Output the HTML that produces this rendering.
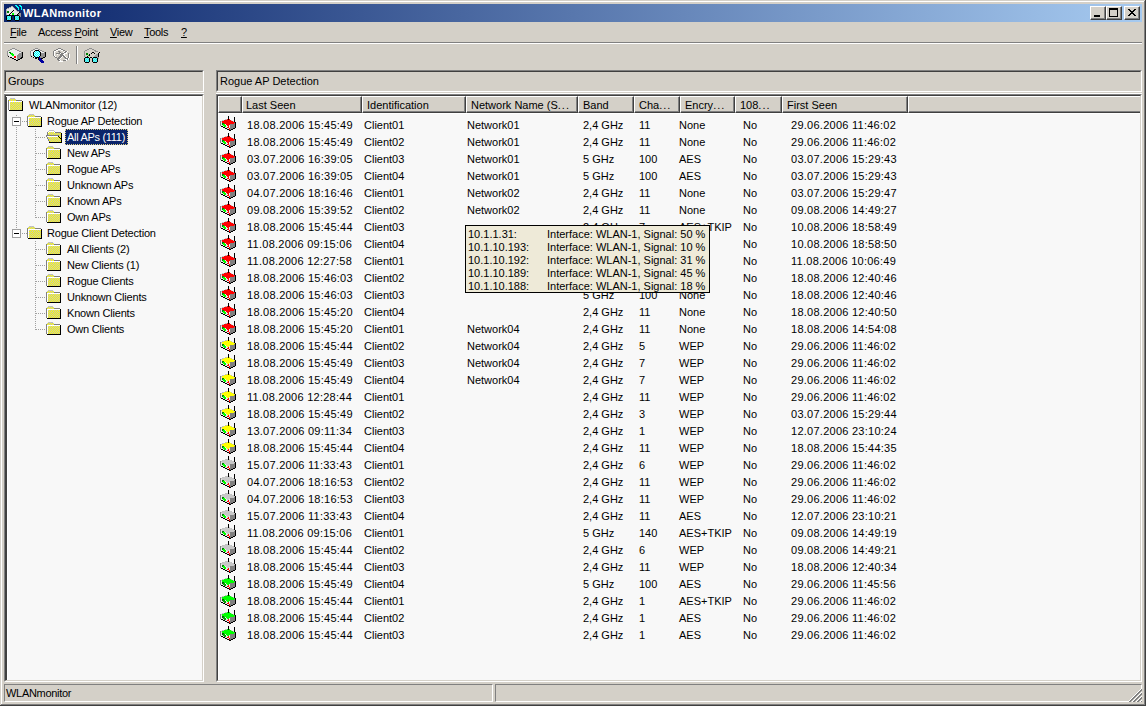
<!DOCTYPE html><html><head><meta charset="utf-8"><style>
*{margin:0;padding:0;box-sizing:border-box}
html,body{width:1146px;height:706px;overflow:hidden;background:#d4d0c8;font-family:"Liberation Sans",sans-serif;font-size:11px;color:#000}
.a{position:absolute}
.t{position:absolute;white-space:pre;line-height:13px;height:13px}
.ic{position:absolute;overflow:visible}
.hl{position:absolute;height:1px}
.vl{position:absolute;width:1px}
u{text-decoration:underline;text-underline-offset:1px;text-decoration-thickness:1px}
</style></head><body>

<div class="a" style="left:1px;top:1px;width:1144px;height:1px;background:#fff;"></div>
<div class="a" style="left:1px;top:1px;width:1px;height:704px;background:#fff;"></div>
<div class="a" style="left:1144px;top:1px;width:1px;height:704px;background:#808080;"></div>
<div class="a" style="left:1px;top:704px;width:1144px;height:1px;background:#808080;"></div>
<div class="a" style="left:1145px;top:0px;width:1px;height:706px;background:#404040;"></div>
<div class="a" style="left:0px;top:705px;width:1146px;height:1px;background:#404040;"></div>
<div class="a" style="left:4px;top:4px;width:1138px;height:18px;background:linear-gradient(to right,#0a246a,#a6caf0)"></div>
<div class="t" style="left:23px;top:7px;color:#fff;font-weight:bold;letter-spacing:0.4px">WLANmonitor</div>
<div class="a" style="left:1090px;top:6px;width:16px;height:14px;background:#d4d0c8;border-top:1px solid #fff;border-left:1px solid #fff;border-right:1px solid #404040;border-bottom:1px solid #404040;box-shadow:inset -1px -1px 0 #808080"><div class="a" style="left:3px;top:8px;width:6px;height:2px;background:#000"></div></div>
<div class="a" style="left:1106px;top:6px;width:16px;height:14px;background:#d4d0c8;border-top:1px solid #fff;border-left:1px solid #fff;border-right:1px solid #404040;border-bottom:1px solid #404040;box-shadow:inset -1px -1px 0 #808080"><div class="a" style="left:2px;top:1px;width:9px;height:9px;border:1px solid #000;border-top-width:2px"></div></div>
<div class="a" style="left:1124px;top:6px;width:16px;height:14px;background:#d4d0c8;border-top:1px solid #fff;border-left:1px solid #fff;border-right:1px solid #404040;border-bottom:1px solid #404040;box-shadow:inset -1px -1px 0 #808080"><svg class="a" style="left:3px;top:2px" width="8" height="7" shape-rendering="crispEdges"><rect x="0" y="0" width="2" height="1" fill="#000"/><rect x="6" y="0" width="2" height="1" fill="#000"/><rect x="1" y="1" width="2" height="1" fill="#000"/><rect x="5" y="1" width="2" height="1" fill="#000"/><rect x="2" y="2" width="4" height="1" fill="#000"/><rect x="3" y="3" width="2" height="1" fill="#000"/><rect x="2" y="4" width="4" height="1" fill="#000"/><rect x="1" y="5" width="2" height="1" fill="#000"/><rect x="5" y="5" width="2" height="1" fill="#000"/><rect x="0" y="6" width="2" height="1" fill="#000"/><rect x="6" y="6" width="2" height="1" fill="#000"/></svg></div>
<div class="t" style="left:10px;top:26px;letter-spacing:-0.3px"><u>F</u>ile</div>
<div class="t" style="left:38px;top:26px;letter-spacing:-0.3px">Access <u>P</u>oint</div>
<div class="t" style="left:110px;top:26px;letter-spacing:-0.3px"><u>V</u>iew</div>
<div class="t" style="left:144px;top:26px;letter-spacing:-0.3px"><u>T</u>ools</div>
<div class="t" style="left:181px;top:26px;letter-spacing:-0.3px"><u>?</u></div>
<div class="a" style="left:4px;top:42px;width:1138px;height:1px;background:#808080;"></div>
<div class="a" style="left:4px;top:43px;width:1138px;height:1px;background:#fff;"></div>
<div class="a" style="left:76px;top:46px;width:1px;height:18px;background:#808080;"></div>
<div class="a" style="left:77px;top:46px;width:1px;height:18px;background:#fff;"></div>
<svg class="ic" style="left:7px;top:47px" width="16" height="14" shape-rendering="crispEdges"><rect x="5" y="1" width="3" height="1" fill="#909090"/><rect x="3" y="2" width="2" height="1" fill="#909090"/><rect x="5" y="2" width="3" height="1" fill="#ececec"/><rect x="8" y="2" width="2" height="1" fill="#909090"/><rect x="1" y="3" width="2" height="1" fill="#909090"/><rect x="3" y="3" width="7" height="1" fill="#ececec"/><rect x="10" y="3" width="2" height="1" fill="#909090"/><rect x="0" y="4" width="1" height="1" fill="#909090"/><rect x="1" y="4" width="11" height="1" fill="#ececec"/><rect x="12" y="4" width="2" height="1" fill="#909090"/><rect x="0" y="5" width="1" height="1" fill="#909090"/><rect x="1" y="5" width="1" height="1" fill="#ececec"/><rect x="2" y="5" width="2" height="1" fill="#008000"/><rect x="4" y="5" width="10" height="1" fill="#ececec"/><rect x="14" y="5" width="1" height="1" fill="#909090"/><rect x="15" y="5" width="1" height="1" fill="#000000"/><rect x="0" y="6" width="1" height="1" fill="#909090"/><rect x="1" y="6" width="2" height="1" fill="#ececec"/><rect x="3" y="6" width="1" height="1" fill="#008000"/><rect x="4" y="6" width="2" height="1" fill="#00ff00"/><rect x="6" y="6" width="6" height="1" fill="#ececec"/><rect x="12" y="6" width="3" height="1" fill="#909090"/><rect x="15" y="6" width="1" height="1" fill="#000000"/><rect x="0" y="7" width="1" height="1" fill="#909090"/><rect x="1" y="7" width="3" height="1" fill="#ececec"/><rect x="4" y="7" width="3" height="1" fill="#00ff00"/><rect x="7" y="7" width="4" height="1" fill="#ececec"/><rect x="11" y="7" width="4" height="1" fill="#909090"/><rect x="15" y="7" width="1" height="1" fill="#000000"/><rect x="0" y="8" width="1" height="1" fill="#909090"/><rect x="2" y="8" width="3" height="1" fill="#ececec"/><rect x="5" y="8" width="2" height="1" fill="#00ff00"/><rect x="7" y="8" width="3" height="1" fill="#ececec"/><rect x="10" y="8" width="5" height="1" fill="#909090"/><rect x="15" y="8" width="1" height="1" fill="#000000"/><rect x="1" y="9" width="1" height="1" fill="#000000"/><rect x="2" y="9" width="5" height="1" fill="#ececec"/><rect x="7" y="9" width="2" height="1" fill="#ff0000"/><rect x="9" y="9" width="1" height="1" fill="#ececec"/><rect x="10" y="9" width="5" height="1" fill="#909090"/><rect x="15" y="9" width="1" height="1" fill="#000000"/><rect x="3" y="10" width="2" height="1" fill="#000000"/><rect x="5" y="10" width="2" height="1" fill="#ececec"/><rect x="7" y="10" width="2" height="1" fill="#ff0000"/><rect x="9" y="10" width="1" height="1" fill="#ececec"/><rect x="10" y="10" width="4" height="1" fill="#909090"/><rect x="14" y="10" width="2" height="1" fill="#000000"/><rect x="5" y="11" width="2" height="1" fill="#000000"/><rect x="7" y="11" width="3" height="1" fill="#ececec"/><rect x="10" y="11" width="3" height="1" fill="#909090"/><rect x="13" y="11" width="2" height="1" fill="#000000"/><rect x="7" y="12" width="2" height="1" fill="#000000"/><rect x="9" y="12" width="1" height="1" fill="#ececec"/><rect x="10" y="12" width="1" height="1" fill="#909090"/><rect x="11" y="12" width="2" height="1" fill="#000000"/><rect x="9" y="13" width="2" height="1" fill="#000000"/></svg>
<svg class="ic" style="left:30px;top:47px" width="16" height="16" shape-rendering="crispEdges"><rect x="5" y="1" width="3" height="1" fill="#909090"/><rect x="3" y="2" width="2" height="1" fill="#909090"/><rect x="5" y="2" width="3" height="1" fill="#ececec"/><rect x="8" y="2" width="2" height="1" fill="#909090"/><rect x="1" y="3" width="2" height="1" fill="#909090"/><rect x="3" y="3" width="2" height="1" fill="#ececec"/><rect x="5" y="3" width="4" height="1" fill="#000000"/><rect x="9" y="3" width="1" height="1" fill="#ececec"/><rect x="10" y="3" width="2" height="1" fill="#909090"/><rect x="0" y="4" width="1" height="1" fill="#909090"/><rect x="1" y="4" width="3" height="1" fill="#ececec"/><rect x="4" y="4" width="1" height="1" fill="#000000"/><rect x="5" y="4" width="1" height="1" fill="#c0ffff"/><rect x="6" y="4" width="1" height="1" fill="#00ffff"/><rect x="7" y="4" width="1" height="1" fill="#c0ffff"/><rect x="8" y="4" width="1" height="1" fill="#00ffff"/><rect x="9" y="4" width="1" height="1" fill="#000000"/><rect x="10" y="4" width="2" height="1" fill="#ececec"/><rect x="12" y="4" width="2" height="1" fill="#909090"/><rect x="0" y="5" width="1" height="1" fill="#909090"/><rect x="1" y="5" width="2" height="1" fill="#ececec"/><rect x="3" y="5" width="1" height="1" fill="#000000"/><rect x="4" y="5" width="1" height="1" fill="#c0ffff"/><rect x="5" y="5" width="1" height="1" fill="#00ffff"/><rect x="6" y="5" width="1" height="1" fill="#c0ffff"/><rect x="7" y="5" width="1" height="1" fill="#00ffff"/><rect x="8" y="5" width="1" height="1" fill="#c0ffff"/><rect x="9" y="5" width="1" height="1" fill="#00ffff"/><rect x="10" y="5" width="1" height="1" fill="#000000"/><rect x="11" y="5" width="3" height="1" fill="#ececec"/><rect x="14" y="5" width="1" height="1" fill="#909090"/><rect x="15" y="5" width="1" height="1" fill="#000000"/><rect x="0" y="6" width="1" height="1" fill="#909090"/><rect x="1" y="6" width="2" height="1" fill="#ececec"/><rect x="3" y="6" width="1" height="1" fill="#000000"/><rect x="4" y="6" width="1" height="1" fill="#00ffff"/><rect x="5" y="6" width="1" height="1" fill="#c0ffff"/><rect x="6" y="6" width="1" height="1" fill="#00ffff"/><rect x="7" y="6" width="1" height="1" fill="#c0ffff"/><rect x="8" y="6" width="1" height="1" fill="#00ffff"/><rect x="9" y="6" width="1" height="1" fill="#c0ffff"/><rect x="10" y="6" width="1" height="1" fill="#000000"/><rect x="11" y="6" width="4" height="1" fill="#909090"/><rect x="15" y="6" width="1" height="1" fill="#000000"/><rect x="0" y="7" width="1" height="1" fill="#909090"/><rect x="1" y="7" width="2" height="1" fill="#ececec"/><rect x="3" y="7" width="1" height="1" fill="#000000"/><rect x="4" y="7" width="1" height="1" fill="#c0ffff"/><rect x="5" y="7" width="1" height="1" fill="#00ffff"/><rect x="6" y="7" width="1" height="1" fill="#c0ffff"/><rect x="7" y="7" width="1" height="1" fill="#00ffff"/><rect x="8" y="7" width="1" height="1" fill="#c0ffff"/><rect x="9" y="7" width="1" height="1" fill="#00ffff"/><rect x="10" y="7" width="1" height="1" fill="#000000"/><rect x="11" y="7" width="4" height="1" fill="#909090"/><rect x="15" y="7" width="1" height="1" fill="#000000"/><rect x="0" y="8" width="1" height="1" fill="#909090"/><rect x="2" y="8" width="1" height="1" fill="#ececec"/><rect x="3" y="8" width="1" height="1" fill="#000000"/><rect x="4" y="8" width="1" height="1" fill="#00ffff"/><rect x="5" y="8" width="1" height="1" fill="#c0ffff"/><rect x="6" y="8" width="1" height="1" fill="#00ffff"/><rect x="7" y="8" width="1" height="1" fill="#c0ffff"/><rect x="8" y="8" width="1" height="1" fill="#00ffff"/><rect x="9" y="8" width="1" height="1" fill="#c0ffff"/><rect x="10" y="8" width="1" height="1" fill="#000000"/><rect x="11" y="8" width="4" height="1" fill="#909090"/><rect x="15" y="8" width="1" height="1" fill="#000000"/><rect x="1" y="9" width="1" height="1" fill="#000000"/><rect x="3" y="9" width="1" height="1" fill="#ececec"/><rect x="4" y="9" width="1" height="1" fill="#000000"/><rect x="5" y="9" width="1" height="1" fill="#00ffff"/><rect x="6" y="9" width="1" height="1" fill="#c0ffff"/><rect x="7" y="9" width="1" height="1" fill="#00ffff"/><rect x="8" y="9" width="1" height="1" fill="#c0ffff"/><rect x="9" y="9" width="1" height="1" fill="#000000"/><rect x="10" y="9" width="5" height="1" fill="#909090"/><rect x="15" y="9" width="1" height="1" fill="#000000"/><rect x="3" y="10" width="1" height="1" fill="#000000"/><rect x="4" y="10" width="1" height="1" fill="#ececec"/><rect x="5" y="10" width="4" height="1" fill="#000000"/><rect x="9" y="10" width="1" height="1" fill="#0000a0"/><rect x="10" y="10" width="3" height="1" fill="#909090"/><rect x="13" y="10" width="2" height="1" fill="#000000"/><rect x="5" y="11" width="2" height="1" fill="#000000"/><rect x="8" y="11" width="1" height="1" fill="#000000"/><rect x="9" y="11" width="2" height="1" fill="#0000a0"/><rect x="11" y="11" width="2" height="1" fill="#000000"/><rect x="8" y="12" width="1" height="1" fill="#000000"/><rect x="9" y="12" width="3" height="1" fill="#0000a0"/><rect x="9" y="13" width="4" height="1" fill="#0000a0"/><rect x="10" y="14" width="4" height="1" fill="#0000a0"/><rect x="11" y="15" width="3" height="1" fill="#0000a0"/></svg>
<svg class="ic" style="left:53px;top:47px" width="17" height="15" shape-rendering="crispEdges"><rect x="5" y="1" width="3" height="1" fill="#808080"/><rect x="3" y="2" width="2" height="1" fill="#808080"/><rect x="5" y="2" width="3" height="1" fill="#ffffff"/><rect x="8" y="2" width="2" height="1" fill="#808080"/><rect x="1" y="3" width="2" height="1" fill="#808080"/><rect x="3" y="3" width="2" height="1" fill="#ffffff"/><rect x="8" y="3" width="2" height="1" fill="#ffffff"/><rect x="10" y="3" width="2" height="1" fill="#808080"/><rect x="0" y="4" width="1" height="1" fill="#808080"/><rect x="1" y="4" width="2" height="1" fill="#ffffff"/><rect x="5" y="4" width="2" height="1" fill="#808080"/><rect x="11" y="4" width="1" height="1" fill="#ffffff"/><rect x="12" y="4" width="2" height="1" fill="#808080"/><rect x="14" y="4" width="1" height="1" fill="#ffffff"/><rect x="0" y="5" width="1" height="1" fill="#808080"/><rect x="1" y="5" width="1" height="1" fill="#ffffff"/><rect x="6" y="5" width="2" height="1" fill="#808080"/><rect x="10" y="5" width="1" height="1" fill="#ffffff"/><rect x="11" y="5" width="2" height="1" fill="#808080"/><rect x="13" y="5" width="1" height="1" fill="#ffffff"/><rect x="0" y="6" width="1" height="1" fill="#808080"/><rect x="1" y="6" width="1" height="1" fill="#ffffff"/><rect x="3" y="6" width="4" height="1" fill="#808080"/><rect x="7" y="6" width="1" height="1" fill="#ffffff"/><rect x="8" y="6" width="3" height="1" fill="#808080"/><rect x="11" y="6" width="3" height="1" fill="#ffffff"/><rect x="15" y="6" width="1" height="1" fill="#808080"/><rect x="0" y="7" width="1" height="1" fill="#808080"/><rect x="1" y="7" width="1" height="1" fill="#ffffff"/><rect x="4" y="7" width="1" height="1" fill="#ffffff"/><rect x="7" y="7" width="3" height="1" fill="#808080"/><rect x="10" y="7" width="2" height="1" fill="#ffffff"/><rect x="15" y="7" width="1" height="1" fill="#808080"/><rect x="16" y="7" width="1" height="1" fill="#ffffff"/><rect x="0" y="8" width="1" height="1" fill="#808080"/><rect x="1" y="8" width="1" height="1" fill="#ffffff"/><rect x="7" y="8" width="4" height="1" fill="#808080"/><rect x="11" y="8" width="1" height="1" fill="#ffffff"/><rect x="15" y="8" width="1" height="1" fill="#808080"/><rect x="16" y="8" width="1" height="1" fill="#ffffff"/><rect x="1" y="9" width="1" height="1" fill="#808080"/><rect x="2" y="9" width="1" height="1" fill="#ffffff"/><rect x="6" y="9" width="3" height="1" fill="#808080"/><rect x="9" y="9" width="1" height="1" fill="#ffffff"/><rect x="10" y="9" width="2" height="1" fill="#808080"/><rect x="12" y="9" width="1" height="1" fill="#ffffff"/><rect x="15" y="9" width="1" height="1" fill="#808080"/><rect x="16" y="9" width="1" height="1" fill="#ffffff"/><rect x="2" y="10" width="2" height="1" fill="#808080"/><rect x="5" y="10" width="3" height="1" fill="#808080"/><rect x="8" y="10" width="1" height="1" fill="#ffffff"/><rect x="11" y="10" width="2" height="1" fill="#808080"/><rect x="13" y="10" width="1" height="1" fill="#ffffff"/><rect x="15" y="10" width="1" height="1" fill="#808080"/><rect x="16" y="10" width="1" height="1" fill="#ffffff"/><rect x="4" y="11" width="3" height="1" fill="#808080"/><rect x="7" y="11" width="1" height="1" fill="#ffffff"/><rect x="12" y="11" width="3" height="1" fill="#808080"/><rect x="15" y="11" width="1" height="1" fill="#ffffff"/><rect x="4" y="12" width="2" height="1" fill="#808080"/><rect x="6" y="12" width="1" height="1" fill="#ffffff"/><rect x="12" y="12" width="2" height="1" fill="#ffffff"/><rect x="14" y="12" width="1" height="1" fill="#808080"/><rect x="15" y="12" width="1" height="1" fill="#ffffff"/><rect x="5" y="13" width="2" height="1" fill="#808080"/><rect x="7" y="13" width="1" height="1" fill="#ffffff"/><rect x="10" y="13" width="3" height="1" fill="#808080"/><rect x="13" y="13" width="1" height="1" fill="#ffffff"/><rect x="6" y="14" width="4" height="1" fill="#ffffff"/></svg>
<svg class="ic" style="left:84px;top:47px" width="16" height="16" shape-rendering="crispEdges"><rect x="5" y="1" width="3" height="1" fill="#909090"/><rect x="3" y="2" width="2" height="1" fill="#909090"/><rect x="8" y="2" width="2" height="1" fill="#909090"/><rect x="1" y="3" width="2" height="1" fill="#909090"/><rect x="10" y="3" width="2" height="1" fill="#909090"/><rect x="0" y="4" width="1" height="1" fill="#909090"/><rect x="11" y="4" width="3" height="1" fill="#909090"/><rect x="0" y="5" width="1" height="1" fill="#909090"/><rect x="8" y="5" width="2" height="1" fill="#000000"/><rect x="15" y="5" width="1" height="1" fill="#000000"/><rect x="0" y="6" width="1" height="1" fill="#909090"/><rect x="2" y="6" width="2" height="1" fill="#008000"/><rect x="7" y="6" width="1" height="1" fill="#000000"/><rect x="10" y="6" width="1" height="1" fill="#000000"/><rect x="14" y="6" width="1" height="1" fill="#000000"/><rect x="0" y="7" width="1" height="1" fill="#909090"/><rect x="2" y="7" width="2" height="1" fill="#008000"/><rect x="5" y="7" width="1" height="1" fill="#000000"/><rect x="12" y="7" width="2" height="1" fill="#a0a0a0"/><rect x="14" y="7" width="1" height="1" fill="#000000"/><rect x="0" y="8" width="1" height="1" fill="#909090"/><rect x="4" y="8" width="1" height="1" fill="#00ff00"/><rect x="5" y="8" width="1" height="1" fill="#000000"/><rect x="11" y="8" width="3" height="1" fill="#a0a0a0"/><rect x="14" y="8" width="1" height="1" fill="#000000"/><rect x="0" y="9" width="1" height="1" fill="#909090"/><rect x="3" y="9" width="1" height="1" fill="#000000"/><rect x="10" y="9" width="4" height="1" fill="#a0a0a0"/><rect x="14" y="9" width="1" height="1" fill="#000000"/><rect x="1" y="10" width="4" height="1" fill="#000000"/><rect x="6" y="10" width="2" height="1" fill="#000000"/><rect x="9" y="10" width="4" height="1" fill="#000000"/><rect x="13" y="10" width="2" height="1" fill="#a0a0a0"/><rect x="0" y="11" width="1" height="1" fill="#000000"/><rect x="1" y="11" width="1" height="1" fill="#00ffff"/><rect x="2" y="11" width="1" height="1" fill="#a0e0e0"/><rect x="3" y="11" width="1" height="1" fill="#00ffff"/><rect x="4" y="11" width="1" height="1" fill="#a0e0e0"/><rect x="5" y="11" width="1" height="1" fill="#000000"/><rect x="8" y="11" width="1" height="1" fill="#000000"/><rect x="9" y="11" width="1" height="1" fill="#00ffff"/><rect x="10" y="11" width="1" height="1" fill="#a0e0e0"/><rect x="11" y="11" width="1" height="1" fill="#00ffff"/><rect x="12" y="11" width="1" height="1" fill="#a0e0e0"/><rect x="13" y="11" width="1" height="1" fill="#000000"/><rect x="14" y="11" width="1" height="1" fill="#a0a0a0"/><rect x="0" y="12" width="1" height="1" fill="#000000"/><rect x="1" y="12" width="1" height="1" fill="#a0e0e0"/><rect x="2" y="12" width="1" height="1" fill="#00ffff"/><rect x="3" y="12" width="1" height="1" fill="#a0e0e0"/><rect x="4" y="12" width="1" height="1" fill="#00ffff"/><rect x="5" y="12" width="1" height="1" fill="#000000"/><rect x="8" y="12" width="1" height="1" fill="#000000"/><rect x="9" y="12" width="1" height="1" fill="#a0e0e0"/><rect x="10" y="12" width="1" height="1" fill="#00ffff"/><rect x="11" y="12" width="1" height="1" fill="#a0e0e0"/><rect x="12" y="12" width="1" height="1" fill="#00ffff"/><rect x="13" y="12" width="1" height="1" fill="#000000"/><rect x="0" y="13" width="1" height="1" fill="#000000"/><rect x="1" y="13" width="1" height="1" fill="#00ffff"/><rect x="2" y="13" width="1" height="1" fill="#a0e0e0"/><rect x="3" y="13" width="1" height="1" fill="#00ffff"/><rect x="4" y="13" width="1" height="1" fill="#a0e0e0"/><rect x="5" y="13" width="1" height="1" fill="#000000"/><rect x="8" y="13" width="1" height="1" fill="#000000"/><rect x="9" y="13" width="1" height="1" fill="#00ffff"/><rect x="10" y="13" width="1" height="1" fill="#a0e0e0"/><rect x="11" y="13" width="1" height="1" fill="#00ffff"/><rect x="12" y="13" width="1" height="1" fill="#a0e0e0"/><rect x="13" y="13" width="1" height="1" fill="#000000"/><rect x="0" y="14" width="1" height="1" fill="#000000"/><rect x="1" y="14" width="1" height="1" fill="#a0e0e0"/><rect x="2" y="14" width="1" height="1" fill="#00ffff"/><rect x="3" y="14" width="1" height="1" fill="#a0e0e0"/><rect x="4" y="14" width="1" height="1" fill="#00ffff"/><rect x="5" y="14" width="1" height="1" fill="#000000"/><rect x="8" y="14" width="1" height="1" fill="#000000"/><rect x="9" y="14" width="1" height="1" fill="#a0e0e0"/><rect x="10" y="14" width="1" height="1" fill="#00ffff"/><rect x="11" y="14" width="1" height="1" fill="#a0e0e0"/><rect x="12" y="14" width="1" height="1" fill="#00ffff"/><rect x="13" y="14" width="1" height="1" fill="#000000"/><rect x="1" y="15" width="4" height="1" fill="#000000"/><rect x="9" y="15" width="4" height="1" fill="#000000"/></svg>
<svg class="ic" style="left:6px;top:5px" width="16" height="16" shape-rendering="crispEdges"><rect x="9" y="0" width="2" height="1" fill="#00ffff"/><rect x="13" y="0" width="2" height="1" fill="#00ffff"/><rect x="5" y="1" width="2" height="1" fill="#b0b0b0"/><rect x="10" y="1" width="2" height="1" fill="#00ffff"/><rect x="14" y="1" width="2" height="1" fill="#00ffff"/><rect x="3" y="2" width="2" height="1" fill="#b0b0b0"/><rect x="5" y="2" width="2" height="1" fill="#e8e8e8"/><rect x="7" y="2" width="1" height="1" fill="#b0b0b0"/><rect x="11" y="2" width="2" height="1" fill="#00ffff"/><rect x="15" y="2" width="1" height="1" fill="#00ffff"/><rect x="1" y="3" width="2" height="1" fill="#b0b0b0"/><rect x="3" y="3" width="5" height="1" fill="#e8e8e8"/><rect x="8" y="3" width="1" height="1" fill="#b0b0b0"/><rect x="12" y="3" width="1" height="1" fill="#00ffff"/><rect x="15" y="3" width="1" height="1" fill="#00ffff"/><rect x="0" y="4" width="1" height="1" fill="#b0b0b0"/><rect x="1" y="4" width="8" height="1" fill="#e8e8e8"/><rect x="9" y="4" width="1" height="1" fill="#b0b0b0"/><rect x="12" y="4" width="1" height="1" fill="#00ffff"/><rect x="15" y="4" width="1" height="1" fill="#00ffff"/><rect x="0" y="5" width="1" height="1" fill="#b0b0b0"/><rect x="1" y="5" width="6" height="1" fill="#e8e8e8"/><rect x="7" y="5" width="1" height="1" fill="#000000"/><rect x="8" y="5" width="2" height="1" fill="#e8e8e8"/><rect x="10" y="5" width="1" height="1" fill="#b0b0b0"/><rect x="0" y="6" width="1" height="1" fill="#b0b0b0"/><rect x="1" y="6" width="2" height="1" fill="#008000"/><rect x="3" y="6" width="3" height="1" fill="#e8e8e8"/><rect x="6" y="6" width="1" height="1" fill="#000000"/><rect x="7" y="6" width="4" height="1" fill="#e8e8e8"/><rect x="11" y="6" width="2" height="1" fill="#b0b0b0"/><rect x="0" y="7" width="1" height="1" fill="#b0b0b0"/><rect x="1" y="7" width="2" height="1" fill="#008000"/><rect x="3" y="7" width="2" height="1" fill="#e8e8e8"/><rect x="5" y="7" width="1" height="1" fill="#000000"/><rect x="6" y="7" width="7" height="1" fill="#e8e8e8"/><rect x="13" y="7" width="1" height="1" fill="#000000"/><rect x="0" y="8" width="1" height="1" fill="#b0b0b0"/><rect x="1" y="8" width="3" height="1" fill="#e8e8e8"/><rect x="4" y="8" width="1" height="1" fill="#000000"/><rect x="5" y="8" width="1" height="1" fill="#e8e8e8"/><rect x="6" y="8" width="2" height="1" fill="#00ff00"/><rect x="8" y="8" width="4" height="1" fill="#e8e8e8"/><rect x="12" y="8" width="1" height="1" fill="#000000"/><rect x="13" y="8" width="2" height="1" fill="#909090"/><rect x="0" y="9" width="1" height="1" fill="#b0b0b0"/><rect x="1" y="9" width="2" height="1" fill="#e8e8e8"/><rect x="3" y="9" width="1" height="1" fill="#000000"/><rect x="4" y="9" width="2" height="1" fill="#e8e8e8"/><rect x="6" y="9" width="2" height="1" fill="#00ff00"/><rect x="8" y="9" width="3" height="1" fill="#e8e8e8"/><rect x="11" y="9" width="1" height="1" fill="#000000"/><rect x="12" y="9" width="3" height="1" fill="#909090"/><rect x="1" y="10" width="4" height="1" fill="#000000"/><rect x="6" y="10" width="2" height="1" fill="#000000"/><rect x="9" y="10" width="4" height="1" fill="#000000"/><rect x="13" y="10" width="2" height="1" fill="#909090"/><rect x="0" y="11" width="1" height="1" fill="#000000"/><rect x="1" y="11" width="1" height="1" fill="#00ffff"/><rect x="2" y="11" width="1" height="1" fill="#80e0e0"/><rect x="3" y="11" width="1" height="1" fill="#00ffff"/><rect x="4" y="11" width="1" height="1" fill="#80e0e0"/><rect x="5" y="11" width="1" height="1" fill="#000000"/><rect x="8" y="11" width="1" height="1" fill="#000000"/><rect x="9" y="11" width="1" height="1" fill="#00ffff"/><rect x="10" y="11" width="1" height="1" fill="#80e0e0"/><rect x="11" y="11" width="1" height="1" fill="#00ffff"/><rect x="12" y="11" width="1" height="1" fill="#80e0e0"/><rect x="13" y="11" width="1" height="1" fill="#000000"/><rect x="14" y="11" width="1" height="1" fill="#909090"/><rect x="0" y="12" width="1" height="1" fill="#000000"/><rect x="1" y="12" width="1" height="1" fill="#80e0e0"/><rect x="2" y="12" width="1" height="1" fill="#00ffff"/><rect x="3" y="12" width="1" height="1" fill="#80e0e0"/><rect x="4" y="12" width="1" height="1" fill="#00ffff"/><rect x="5" y="12" width="1" height="1" fill="#000000"/><rect x="8" y="12" width="1" height="1" fill="#000000"/><rect x="9" y="12" width="1" height="1" fill="#80e0e0"/><rect x="10" y="12" width="1" height="1" fill="#00ffff"/><rect x="11" y="12" width="1" height="1" fill="#80e0e0"/><rect x="12" y="12" width="1" height="1" fill="#00ffff"/><rect x="13" y="12" width="1" height="1" fill="#000000"/><rect x="0" y="13" width="1" height="1" fill="#000000"/><rect x="1" y="13" width="1" height="1" fill="#00ffff"/><rect x="2" y="13" width="1" height="1" fill="#80e0e0"/><rect x="3" y="13" width="1" height="1" fill="#00ffff"/><rect x="4" y="13" width="1" height="1" fill="#80e0e0"/><rect x="5" y="13" width="1" height="1" fill="#000000"/><rect x="8" y="13" width="1" height="1" fill="#000000"/><rect x="9" y="13" width="1" height="1" fill="#00ffff"/><rect x="10" y="13" width="1" height="1" fill="#80e0e0"/><rect x="11" y="13" width="1" height="1" fill="#00ffff"/><rect x="12" y="13" width="1" height="1" fill="#80e0e0"/><rect x="13" y="13" width="1" height="1" fill="#000000"/><rect x="0" y="14" width="1" height="1" fill="#000000"/><rect x="1" y="14" width="1" height="1" fill="#80e0e0"/><rect x="2" y="14" width="1" height="1" fill="#00ffff"/><rect x="3" y="14" width="1" height="1" fill="#80e0e0"/><rect x="4" y="14" width="1" height="1" fill="#00ffff"/><rect x="5" y="14" width="1" height="1" fill="#000000"/><rect x="8" y="14" width="1" height="1" fill="#000000"/><rect x="9" y="14" width="1" height="1" fill="#80e0e0"/><rect x="10" y="14" width="1" height="1" fill="#00ffff"/><rect x="11" y="14" width="1" height="1" fill="#80e0e0"/><rect x="12" y="14" width="1" height="1" fill="#00ffff"/><rect x="13" y="14" width="1" height="1" fill="#000000"/><rect x="1" y="15" width="4" height="1" fill="#000000"/><rect x="9" y="15" width="4" height="1" fill="#000000"/></svg>
<div class="a" style="left:4px;top:70px;width:200px;height:22px;border-top:1px solid #808080;border-left:1px solid #808080;border-right:1px solid #fff;border-bottom:1px solid #fff"><div class="a" style="left:0;top:0;right:0;bottom:0;border-top:1px solid #404040;border-left:1px solid #404040;border-right:1px solid #d4d0c8;border-bottom:1px solid #d4d0c8;background:#d4d0c8"></div></div>
<div class="t" style="left:8px;top:75px">Groups</div>
<div class="a" style="left:216px;top:70px;width:926px;height:22px;border-top:1px solid #808080;border-left:1px solid #808080;border-right:1px solid #fff;border-bottom:1px solid #fff"><div class="a" style="left:0;top:0;right:0;bottom:0;border-top:1px solid #404040;border-left:1px solid #404040;border-right:1px solid #d4d0c8;border-bottom:1px solid #d4d0c8;background:#d4d0c8"></div></div>
<div class="t" style="left:220px;top:75px">Rogue AP Detection</div>
<div class="a" style="left:4px;top:93px;width:200px;height:1px;background:#fff;"></div>
<div class="a" style="left:216px;top:93px;width:926px;height:1px;background:#fff;"></div>
<div class="a" style="left:4px;top:94px;width:200px;height:588px;border-top:1px solid #808080;border-left:1px solid #808080;border-right:1px solid #fff;border-bottom:1px solid #fff"><div class="a" style="left:0;top:0;right:0;bottom:0;border-top:1px solid #404040;border-left:1px solid #404040;border-right:1px solid #d4d0c8;border-bottom:1px solid #d4d0c8;background:#f8f8f8"></div></div>
<div class="a" style="left:6px;top:96px;width:196px;height:1px;background:#fff;"></div>
<div class="a" style="left:6px;top:97px;width:1px;height:583px;background:#404040;"></div>
<div class="a" style="left:7px;top:97px;width:1px;height:583px;background:#fff;"></div>
<div class="a" style="left:216px;top:94px;width:926px;height:588px;border-top:1px solid #808080;border-left:1px solid #808080;border-right:1px solid #fff;border-bottom:1px solid #fff"><div class="a" style="left:0;top:0;right:0;bottom:0;border-top:1px solid #404040;border-left:1px solid #404040;border-right:1px solid #d4d0c8;border-bottom:1px solid #d4d0c8;background:#f8f8f8"></div></div>
<div class="a" style="left:218px;top:113px;width:922px;height:1px;background:#fff;"></div>
<div class="a" style="left:218px;top:96px;width:1px;height:584px;background:#fff;"></div>
<div class="a" style="left:218px;top:96px;width:24px;height:17px;background:#d4d0c8;border-top:1px solid #fff;border-left:1px solid #fff;border-right:1px solid #404040;border-bottom:1px solid #404040;box-shadow:inset -1px -1px 0 #808080"></div>
<div class="a" style="left:242px;top:96px;width:120px;height:17px;background:#d4d0c8;border-top:1px solid #fff;border-left:1px solid #fff;border-right:1px solid #404040;border-bottom:1px solid #404040;box-shadow:inset -1px -1px 0 #808080"></div>
<div class="t" style="left:246px;top:99px">Last Seen</div>
<div class="a" style="left:362px;top:96px;width:104px;height:17px;background:#d4d0c8;border-top:1px solid #fff;border-left:1px solid #fff;border-right:1px solid #404040;border-bottom:1px solid #404040;box-shadow:inset -1px -1px 0 #808080"></div>
<div class="t" style="left:367px;top:99px">Identification</div>
<div class="a" style="left:466px;top:96px;width:112px;height:17px;background:#d4d0c8;border-top:1px solid #fff;border-left:1px solid #fff;border-right:1px solid #404040;border-bottom:1px solid #404040;box-shadow:inset -1px -1px 0 #808080"></div>
<div class="t" style="left:471px;top:99px">Network Name (S<span style="letter-spacing:1px">...</span></div>
<div class="a" style="left:578px;top:96px;width:56px;height:17px;background:#d4d0c8;border-top:1px solid #fff;border-left:1px solid #fff;border-right:1px solid #404040;border-bottom:1px solid #404040;box-shadow:inset -1px -1px 0 #808080"></div>
<div class="t" style="left:583px;top:99px">Band</div>
<div class="a" style="left:634px;top:96px;width:46px;height:17px;background:#d4d0c8;border-top:1px solid #fff;border-left:1px solid #fff;border-right:1px solid #404040;border-bottom:1px solid #404040;box-shadow:inset -1px -1px 0 #808080"></div>
<div class="t" style="left:639px;top:99px">Cha<span style="letter-spacing:1px">...</span></div>
<div class="a" style="left:680px;top:96px;width:55px;height:17px;background:#d4d0c8;border-top:1px solid #fff;border-left:1px solid #fff;border-right:1px solid #404040;border-bottom:1px solid #404040;box-shadow:inset -1px -1px 0 #808080"></div>
<div class="t" style="left:685px;top:99px">Encry<span style="letter-spacing:1px">...</span></div>
<div class="a" style="left:735px;top:96px;width:47px;height:17px;background:#d4d0c8;border-top:1px solid #fff;border-left:1px solid #fff;border-right:1px solid #404040;border-bottom:1px solid #404040;box-shadow:inset -1px -1px 0 #808080"></div>
<div class="t" style="left:740px;top:99px">108<span style="letter-spacing:1px">...</span></div>
<div class="a" style="left:782px;top:96px;width:126px;height:17px;background:#d4d0c8;border-top:1px solid #fff;border-left:1px solid #fff;border-right:1px solid #404040;border-bottom:1px solid #404040;box-shadow:inset -1px -1px 0 #808080"></div>
<div class="t" style="left:787px;top:99px">First Seen</div>
<div class="a" style="left:908px;top:96px;width:232px;height:17px;background:#d4d0c8;border-top:1px solid #fff;border-left:1px solid #fff;border-bottom:1px solid #404040;box-shadow:inset 0 -1px 0 #808080"></div>
<svg class="ic" style="left:220px;top:115px" width="16" height="16"><use href="#rtr"/></svg>
<div class="t" style="left:247px;top:119px;letter-spacing:0.26px;">18.08.2006 15:45:49</div>
<div class="t" style="left:364px;top:119px;">Client01</div>
<div class="t" style="left:467px;top:119px;">Network01</div>
<div class="t" style="left:583px;top:119px;">2,4 GHz</div>
<div class="t" style="left:639px;top:119px;">11</div>
<div class="t" style="left:679px;top:119px;">None</div>
<div class="t" style="left:743px;top:119px;">No</div>
<div class="t" style="left:791px;top:119px;letter-spacing:0.26px;">29.06.2006 11:46:02</div>
<svg class="ic" style="left:220px;top:132px" width="16" height="16"><use href="#rtr"/></svg>
<div class="t" style="left:247px;top:136px;letter-spacing:0.26px;">18.08.2006 15:45:49</div>
<div class="t" style="left:364px;top:136px;">Client02</div>
<div class="t" style="left:467px;top:136px;">Network01</div>
<div class="t" style="left:583px;top:136px;">2,4 GHz</div>
<div class="t" style="left:639px;top:136px;">11</div>
<div class="t" style="left:679px;top:136px;">None</div>
<div class="t" style="left:743px;top:136px;">No</div>
<div class="t" style="left:791px;top:136px;letter-spacing:0.26px;">29.06.2006 11:46:02</div>
<svg class="ic" style="left:220px;top:149px" width="16" height="16"><use href="#rtr"/></svg>
<div class="t" style="left:247px;top:153px;letter-spacing:0.26px;">03.07.2006 16:39:05</div>
<div class="t" style="left:364px;top:153px;">Client03</div>
<div class="t" style="left:467px;top:153px;">Network01</div>
<div class="t" style="left:583px;top:153px;">5 GHz</div>
<div class="t" style="left:639px;top:153px;">100</div>
<div class="t" style="left:679px;top:153px;">AES</div>
<div class="t" style="left:743px;top:153px;">No</div>
<div class="t" style="left:791px;top:153px;letter-spacing:0.26px;">03.07.2006 15:29:43</div>
<svg class="ic" style="left:220px;top:166px" width="16" height="16"><use href="#rtr"/></svg>
<div class="t" style="left:247px;top:170px;letter-spacing:0.26px;">03.07.2006 16:39:05</div>
<div class="t" style="left:364px;top:170px;">Client04</div>
<div class="t" style="left:467px;top:170px;">Network01</div>
<div class="t" style="left:583px;top:170px;">5 GHz</div>
<div class="t" style="left:639px;top:170px;">100</div>
<div class="t" style="left:679px;top:170px;">AES</div>
<div class="t" style="left:743px;top:170px;">No</div>
<div class="t" style="left:791px;top:170px;letter-spacing:0.26px;">03.07.2006 15:29:43</div>
<svg class="ic" style="left:220px;top:183px" width="16" height="16"><use href="#rtr"/></svg>
<div class="t" style="left:247px;top:187px;letter-spacing:0.26px;">04.07.2006 18:16:46</div>
<div class="t" style="left:364px;top:187px;">Client01</div>
<div class="t" style="left:467px;top:187px;">Network02</div>
<div class="t" style="left:583px;top:187px;">2,4 GHz</div>
<div class="t" style="left:639px;top:187px;">11</div>
<div class="t" style="left:679px;top:187px;">None</div>
<div class="t" style="left:743px;top:187px;">No</div>
<div class="t" style="left:791px;top:187px;letter-spacing:0.26px;">03.07.2006 15:29:47</div>
<svg class="ic" style="left:220px;top:200px" width="16" height="16"><use href="#rtr"/></svg>
<div class="t" style="left:247px;top:204px;letter-spacing:0.26px;">09.08.2006 15:39:52</div>
<div class="t" style="left:364px;top:204px;">Client02</div>
<div class="t" style="left:467px;top:204px;">Network02</div>
<div class="t" style="left:583px;top:204px;">2,4 GHz</div>
<div class="t" style="left:639px;top:204px;">11</div>
<div class="t" style="left:679px;top:204px;">None</div>
<div class="t" style="left:743px;top:204px;">No</div>
<div class="t" style="left:791px;top:204px;letter-spacing:0.26px;">09.08.2006 14:49:27</div>
<svg class="ic" style="left:220px;top:217px" width="16" height="16"><use href="#rtr"/></svg>
<div class="t" style="left:247px;top:221px;letter-spacing:0.26px;">18.08.2006 15:45:44</div>
<div class="t" style="left:364px;top:221px;">Client03</div>
<div class="t" style="left:583px;top:221px;">2,4 GHz</div>
<div class="t" style="left:639px;top:221px;">7</div>
<div class="t" style="left:679px;top:221px;">AES+TKIP</div>
<div class="t" style="left:743px;top:221px;">No</div>
<div class="t" style="left:791px;top:221px;letter-spacing:0.26px;">10.08.2006 18:58:49</div>
<svg class="ic" style="left:220px;top:234px" width="16" height="16"><use href="#rtr"/></svg>
<div class="t" style="left:247px;top:238px;letter-spacing:0.26px;">11.08.2006 09:15:06</div>
<div class="t" style="left:364px;top:238px;">Client04</div>
<div class="t" style="left:583px;top:238px;">2,4 GHz</div>
<div class="t" style="left:639px;top:238px;">11</div>
<div class="t" style="left:679px;top:238px;">None</div>
<div class="t" style="left:743px;top:238px;">No</div>
<div class="t" style="left:791px;top:238px;letter-spacing:0.26px;">10.08.2006 18:58:50</div>
<svg class="ic" style="left:220px;top:251px" width="16" height="16"><use href="#rtr"/></svg>
<div class="t" style="left:247px;top:255px;letter-spacing:0.26px;">11.08.2006 12:27:58</div>
<div class="t" style="left:364px;top:255px;">Client01</div>
<div class="t" style="left:583px;top:255px;">2,4 GHz</div>
<div class="t" style="left:639px;top:255px;">11</div>
<div class="t" style="left:679px;top:255px;">None</div>
<div class="t" style="left:743px;top:255px;">No</div>
<div class="t" style="left:791px;top:255px;letter-spacing:0.26px;">11.08.2006 10:06:49</div>
<svg class="ic" style="left:220px;top:268px" width="16" height="16"><use href="#rtr"/></svg>
<div class="t" style="left:247px;top:272px;letter-spacing:0.26px;">18.08.2006 15:46:03</div>
<div class="t" style="left:364px;top:272px;">Client02</div>
<div class="t" style="left:583px;top:272px;">2,4 GHz</div>
<div class="t" style="left:639px;top:272px;">11</div>
<div class="t" style="left:679px;top:272px;">None</div>
<div class="t" style="left:743px;top:272px;">No</div>
<div class="t" style="left:791px;top:272px;letter-spacing:0.26px;">18.08.2006 12:40:46</div>
<svg class="ic" style="left:220px;top:285px" width="16" height="16"><use href="#rtr"/></svg>
<div class="t" style="left:247px;top:289px;letter-spacing:0.26px;">18.08.2006 15:46:03</div>
<div class="t" style="left:364px;top:289px;">Client03</div>
<div class="t" style="left:583px;top:289px;">5 GHz</div>
<div class="t" style="left:639px;top:289px;">100</div>
<div class="t" style="left:679px;top:289px;">None</div>
<div class="t" style="left:743px;top:289px;">No</div>
<div class="t" style="left:791px;top:289px;letter-spacing:0.26px;">18.08.2006 12:40:46</div>
<svg class="ic" style="left:220px;top:302px" width="16" height="16"><use href="#rtr"/></svg>
<div class="t" style="left:247px;top:306px;letter-spacing:0.26px;">18.08.2006 15:45:20</div>
<div class="t" style="left:364px;top:306px;">Client04</div>
<div class="t" style="left:583px;top:306px;">2,4 GHz</div>
<div class="t" style="left:639px;top:306px;">11</div>
<div class="t" style="left:679px;top:306px;">None</div>
<div class="t" style="left:743px;top:306px;">No</div>
<div class="t" style="left:791px;top:306px;letter-spacing:0.26px;">18.08.2006 12:40:50</div>
<svg class="ic" style="left:220px;top:319px" width="16" height="16"><use href="#rtr"/></svg>
<div class="t" style="left:247px;top:323px;letter-spacing:0.26px;">18.08.2006 15:45:20</div>
<div class="t" style="left:364px;top:323px;">Client01</div>
<div class="t" style="left:467px;top:323px;">Network04</div>
<div class="t" style="left:583px;top:323px;">2,4 GHz</div>
<div class="t" style="left:639px;top:323px;">11</div>
<div class="t" style="left:679px;top:323px;">None</div>
<div class="t" style="left:743px;top:323px;">No</div>
<div class="t" style="left:791px;top:323px;letter-spacing:0.26px;">18.08.2006 14:54:08</div>
<svg class="ic" style="left:220px;top:336px" width="16" height="16"><use href="#rty"/></svg>
<div class="t" style="left:247px;top:340px;letter-spacing:0.26px;">18.08.2006 15:45:44</div>
<div class="t" style="left:364px;top:340px;">Client02</div>
<div class="t" style="left:467px;top:340px;">Network04</div>
<div class="t" style="left:583px;top:340px;">2,4 GHz</div>
<div class="t" style="left:639px;top:340px;">5</div>
<div class="t" style="left:679px;top:340px;">WEP</div>
<div class="t" style="left:743px;top:340px;">No</div>
<div class="t" style="left:791px;top:340px;letter-spacing:0.26px;">29.06.2006 11:46:02</div>
<svg class="ic" style="left:220px;top:353px" width="16" height="16"><use href="#rty"/></svg>
<div class="t" style="left:247px;top:357px;letter-spacing:0.26px;">18.08.2006 15:45:49</div>
<div class="t" style="left:364px;top:357px;">Client03</div>
<div class="t" style="left:467px;top:357px;">Network04</div>
<div class="t" style="left:583px;top:357px;">2,4 GHz</div>
<div class="t" style="left:639px;top:357px;">7</div>
<div class="t" style="left:679px;top:357px;">WEP</div>
<div class="t" style="left:743px;top:357px;">No</div>
<div class="t" style="left:791px;top:357px;letter-spacing:0.26px;">29.06.2006 11:46:02</div>
<svg class="ic" style="left:220px;top:370px" width="16" height="16"><use href="#rty"/></svg>
<div class="t" style="left:247px;top:374px;letter-spacing:0.26px;">18.08.2006 15:45:49</div>
<div class="t" style="left:364px;top:374px;">Client04</div>
<div class="t" style="left:467px;top:374px;">Network04</div>
<div class="t" style="left:583px;top:374px;">2,4 GHz</div>
<div class="t" style="left:639px;top:374px;">7</div>
<div class="t" style="left:679px;top:374px;">WEP</div>
<div class="t" style="left:743px;top:374px;">No</div>
<div class="t" style="left:791px;top:374px;letter-spacing:0.26px;">29.06.2006 11:46:02</div>
<svg class="ic" style="left:220px;top:387px" width="16" height="16"><use href="#rty"/></svg>
<div class="t" style="left:247px;top:391px;letter-spacing:0.26px;">11.08.2006 12:28:44</div>
<div class="t" style="left:364px;top:391px;">Client01</div>
<div class="t" style="left:583px;top:391px;">2,4 GHz</div>
<div class="t" style="left:639px;top:391px;">11</div>
<div class="t" style="left:679px;top:391px;">WEP</div>
<div class="t" style="left:743px;top:391px;">No</div>
<div class="t" style="left:791px;top:391px;letter-spacing:0.26px;">29.06.2006 11:46:02</div>
<svg class="ic" style="left:220px;top:404px" width="16" height="16"><use href="#rty"/></svg>
<div class="t" style="left:247px;top:408px;letter-spacing:0.26px;">18.08.2006 15:45:49</div>
<div class="t" style="left:364px;top:408px;">Client02</div>
<div class="t" style="left:583px;top:408px;">2,4 GHz</div>
<div class="t" style="left:639px;top:408px;">3</div>
<div class="t" style="left:679px;top:408px;">WEP</div>
<div class="t" style="left:743px;top:408px;">No</div>
<div class="t" style="left:791px;top:408px;letter-spacing:0.26px;">03.07.2006 15:29:44</div>
<svg class="ic" style="left:220px;top:421px" width="16" height="16"><use href="#rty"/></svg>
<div class="t" style="left:247px;top:425px;letter-spacing:0.26px;">13.07.2006 09:11:34</div>
<div class="t" style="left:364px;top:425px;">Client03</div>
<div class="t" style="left:583px;top:425px;">2,4 GHz</div>
<div class="t" style="left:639px;top:425px;">1</div>
<div class="t" style="left:679px;top:425px;">WEP</div>
<div class="t" style="left:743px;top:425px;">No</div>
<div class="t" style="left:791px;top:425px;letter-spacing:0.26px;">12.07.2006 23:10:24</div>
<svg class="ic" style="left:220px;top:438px" width="16" height="16"><use href="#rty"/></svg>
<div class="t" style="left:247px;top:442px;letter-spacing:0.26px;">18.08.2006 15:45:44</div>
<div class="t" style="left:364px;top:442px;">Client04</div>
<div class="t" style="left:583px;top:442px;">2,4 GHz</div>
<div class="t" style="left:639px;top:442px;">11</div>
<div class="t" style="left:679px;top:442px;">WEP</div>
<div class="t" style="left:743px;top:442px;">No</div>
<div class="t" style="left:791px;top:442px;letter-spacing:0.26px;">18.08.2006 15:44:35</div>
<svg class="ic" style="left:220px;top:455px" width="16" height="16"><use href="#rtg"/></svg>
<div class="t" style="left:247px;top:459px;letter-spacing:0.26px;">15.07.2006 11:33:43</div>
<div class="t" style="left:364px;top:459px;">Client01</div>
<div class="t" style="left:583px;top:459px;">2,4 GHz</div>
<div class="t" style="left:639px;top:459px;">6</div>
<div class="t" style="left:679px;top:459px;">WEP</div>
<div class="t" style="left:743px;top:459px;">No</div>
<div class="t" style="left:791px;top:459px;letter-spacing:0.26px;">29.06.2006 11:46:02</div>
<svg class="ic" style="left:220px;top:472px" width="16" height="16"><use href="#rtg"/></svg>
<div class="t" style="left:247px;top:476px;letter-spacing:0.26px;">04.07.2006 18:16:53</div>
<div class="t" style="left:364px;top:476px;">Client02</div>
<div class="t" style="left:583px;top:476px;">2,4 GHz</div>
<div class="t" style="left:639px;top:476px;">11</div>
<div class="t" style="left:679px;top:476px;">WEP</div>
<div class="t" style="left:743px;top:476px;">No</div>
<div class="t" style="left:791px;top:476px;letter-spacing:0.26px;">29.06.2006 11:46:02</div>
<svg class="ic" style="left:220px;top:489px" width="16" height="16"><use href="#rtg"/></svg>
<div class="t" style="left:247px;top:493px;letter-spacing:0.26px;">04.07.2006 18:16:53</div>
<div class="t" style="left:364px;top:493px;">Client03</div>
<div class="t" style="left:583px;top:493px;">2,4 GHz</div>
<div class="t" style="left:639px;top:493px;">11</div>
<div class="t" style="left:679px;top:493px;">WEP</div>
<div class="t" style="left:743px;top:493px;">No</div>
<div class="t" style="left:791px;top:493px;letter-spacing:0.26px;">29.06.2006 11:46:02</div>
<svg class="ic" style="left:220px;top:506px" width="16" height="16"><use href="#rtg"/></svg>
<div class="t" style="left:247px;top:510px;letter-spacing:0.26px;">15.07.2006 11:33:43</div>
<div class="t" style="left:364px;top:510px;">Client04</div>
<div class="t" style="left:583px;top:510px;">2,4 GHz</div>
<div class="t" style="left:639px;top:510px;">11</div>
<div class="t" style="left:679px;top:510px;">AES</div>
<div class="t" style="left:743px;top:510px;">No</div>
<div class="t" style="left:791px;top:510px;letter-spacing:0.26px;">12.07.2006 23:10:21</div>
<svg class="ic" style="left:220px;top:523px" width="16" height="16"><use href="#rtg"/></svg>
<div class="t" style="left:247px;top:527px;letter-spacing:0.26px;">11.08.2006 09:15:06</div>
<div class="t" style="left:364px;top:527px;">Client01</div>
<div class="t" style="left:583px;top:527px;">5 GHz</div>
<div class="t" style="left:639px;top:527px;">140</div>
<div class="t" style="left:679px;top:527px;">AES+TKIP</div>
<div class="t" style="left:743px;top:527px;">No</div>
<div class="t" style="left:791px;top:527px;letter-spacing:0.26px;">09.08.2006 14:49:19</div>
<svg class="ic" style="left:220px;top:540px" width="16" height="16"><use href="#rtg"/></svg>
<div class="t" style="left:247px;top:544px;letter-spacing:0.26px;">18.08.2006 15:45:44</div>
<div class="t" style="left:364px;top:544px;">Client02</div>
<div class="t" style="left:583px;top:544px;">2,4 GHz</div>
<div class="t" style="left:639px;top:544px;">6</div>
<div class="t" style="left:679px;top:544px;">WEP</div>
<div class="t" style="left:743px;top:544px;">No</div>
<div class="t" style="left:791px;top:544px;letter-spacing:0.26px;">09.08.2006 14:49:21</div>
<svg class="ic" style="left:220px;top:557px" width="16" height="16"><use href="#rtg"/></svg>
<div class="t" style="left:247px;top:561px;letter-spacing:0.26px;">18.08.2006 15:45:44</div>
<div class="t" style="left:364px;top:561px;">Client03</div>
<div class="t" style="left:583px;top:561px;">2,4 GHz</div>
<div class="t" style="left:639px;top:561px;">11</div>
<div class="t" style="left:679px;top:561px;">WEP</div>
<div class="t" style="left:743px;top:561px;">No</div>
<div class="t" style="left:791px;top:561px;letter-spacing:0.26px;">18.08.2006 12:40:34</div>
<svg class="ic" style="left:220px;top:574px" width="16" height="16"><use href="#rtn"/></svg>
<div class="t" style="left:247px;top:578px;letter-spacing:0.26px;">18.08.2006 15:45:49</div>
<div class="t" style="left:364px;top:578px;">Client04</div>
<div class="t" style="left:583px;top:578px;">5 GHz</div>
<div class="t" style="left:639px;top:578px;">100</div>
<div class="t" style="left:679px;top:578px;">AES</div>
<div class="t" style="left:743px;top:578px;">No</div>
<div class="t" style="left:791px;top:578px;letter-spacing:0.26px;">29.06.2006 11:45:56</div>
<svg class="ic" style="left:220px;top:591px" width="16" height="16"><use href="#rtn"/></svg>
<div class="t" style="left:247px;top:595px;letter-spacing:0.26px;">18.08.2006 15:45:44</div>
<div class="t" style="left:364px;top:595px;">Client01</div>
<div class="t" style="left:583px;top:595px;">2,4 GHz</div>
<div class="t" style="left:639px;top:595px;">1</div>
<div class="t" style="left:679px;top:595px;">AES+TKIP</div>
<div class="t" style="left:743px;top:595px;">No</div>
<div class="t" style="left:791px;top:595px;letter-spacing:0.26px;">29.06.2006 11:46:02</div>
<svg class="ic" style="left:220px;top:608px" width="16" height="16"><use href="#rtn"/></svg>
<div class="t" style="left:247px;top:612px;letter-spacing:0.26px;">18.08.2006 15:45:44</div>
<div class="t" style="left:364px;top:612px;">Client02</div>
<div class="t" style="left:583px;top:612px;">2,4 GHz</div>
<div class="t" style="left:639px;top:612px;">1</div>
<div class="t" style="left:679px;top:612px;">AES</div>
<div class="t" style="left:743px;top:612px;">No</div>
<div class="t" style="left:791px;top:612px;letter-spacing:0.26px;">29.06.2006 11:46:02</div>
<svg class="ic" style="left:220px;top:625px" width="16" height="16"><use href="#rtn"/></svg>
<div class="t" style="left:247px;top:629px;letter-spacing:0.26px;">18.08.2006 15:45:44</div>
<div class="t" style="left:364px;top:629px;">Client03</div>
<div class="t" style="left:583px;top:629px;">2,4 GHz</div>
<div class="t" style="left:639px;top:629px;">1</div>
<div class="t" style="left:679px;top:629px;">AES</div>
<div class="t" style="left:743px;top:629px;">No</div>
<div class="t" style="left:791px;top:629px;letter-spacing:0.26px;">29.06.2006 11:46:02</div>
<div class="a" style="left:465px;top:225px;width:245px;height:68px;background:#eeead8;border:1px solid #000"></div>
<div class="t" style="left:468px;top:228px">10.1.1.31:</div>
<div class="t" style="left:547px;top:228px">Interface: WLAN-1, Signal: 50 %</div>
<div class="t" style="left:468px;top:241px">10.1.10.193:</div>
<div class="t" style="left:547px;top:241px">Interface: WLAN-1, Signal: 10 %</div>
<div class="t" style="left:468px;top:254px">10.1.10.192:</div>
<div class="t" style="left:547px;top:254px">Interface: WLAN-1, Signal: 31 %</div>
<div class="t" style="left:468px;top:267px">10.1.10.189:</div>
<div class="t" style="left:547px;top:267px">Interface: WLAN-1, Signal: 45 %</div>
<div class="t" style="left:468px;top:280px">10.1.10.188:</div>
<div class="t" style="left:547px;top:280px">Interface: WLAN-1, Signal: 18 %</div>
<svg class="ic" style="left:0;top:0" width="210" height="340" fill="#a0a0a0" shape-rendering="crispEdges"><rect x="16" y="115" width="1" height="1"/><rect x="16" y="117" width="1" height="1"/><rect x="16" y="119" width="1" height="1"/><rect x="16" y="121" width="1" height="1"/><rect x="16" y="123" width="1" height="1"/><rect x="16" y="125" width="1" height="1"/><rect x="16" y="127" width="1" height="1"/><rect x="16" y="129" width="1" height="1"/><rect x="16" y="131" width="1" height="1"/><rect x="16" y="133" width="1" height="1"/><rect x="16" y="135" width="1" height="1"/><rect x="16" y="137" width="1" height="1"/><rect x="16" y="139" width="1" height="1"/><rect x="16" y="141" width="1" height="1"/><rect x="16" y="143" width="1" height="1"/><rect x="16" y="145" width="1" height="1"/><rect x="16" y="147" width="1" height="1"/><rect x="16" y="149" width="1" height="1"/><rect x="16" y="151" width="1" height="1"/><rect x="16" y="153" width="1" height="1"/><rect x="16" y="155" width="1" height="1"/><rect x="16" y="157" width="1" height="1"/><rect x="16" y="159" width="1" height="1"/><rect x="16" y="161" width="1" height="1"/><rect x="16" y="163" width="1" height="1"/><rect x="16" y="165" width="1" height="1"/><rect x="16" y="167" width="1" height="1"/><rect x="16" y="169" width="1" height="1"/><rect x="16" y="171" width="1" height="1"/><rect x="16" y="173" width="1" height="1"/><rect x="16" y="175" width="1" height="1"/><rect x="16" y="177" width="1" height="1"/><rect x="16" y="179" width="1" height="1"/><rect x="16" y="181" width="1" height="1"/><rect x="16" y="183" width="1" height="1"/><rect x="16" y="185" width="1" height="1"/><rect x="16" y="187" width="1" height="1"/><rect x="16" y="189" width="1" height="1"/><rect x="16" y="191" width="1" height="1"/><rect x="16" y="193" width="1" height="1"/><rect x="16" y="195" width="1" height="1"/><rect x="16" y="197" width="1" height="1"/><rect x="16" y="199" width="1" height="1"/><rect x="16" y="201" width="1" height="1"/><rect x="16" y="203" width="1" height="1"/><rect x="16" y="205" width="1" height="1"/><rect x="16" y="207" width="1" height="1"/><rect x="16" y="209" width="1" height="1"/><rect x="16" y="211" width="1" height="1"/><rect x="16" y="213" width="1" height="1"/><rect x="16" y="215" width="1" height="1"/><rect x="16" y="217" width="1" height="1"/><rect x="16" y="219" width="1" height="1"/><rect x="16" y="221" width="1" height="1"/><rect x="16" y="223" width="1" height="1"/><rect x="16" y="225" width="1" height="1"/><rect x="16" y="227" width="1" height="1"/><rect x="16" y="229" width="1" height="1"/><rect x="16" y="231" width="1" height="1"/><rect x="16" y="233" width="1" height="1"/><rect x="35" y="129" width="1" height="1"/><rect x="35" y="131" width="1" height="1"/><rect x="35" y="133" width="1" height="1"/><rect x="35" y="135" width="1" height="1"/><rect x="35" y="137" width="1" height="1"/><rect x="35" y="139" width="1" height="1"/><rect x="35" y="141" width="1" height="1"/><rect x="35" y="143" width="1" height="1"/><rect x="35" y="145" width="1" height="1"/><rect x="35" y="147" width="1" height="1"/><rect x="35" y="149" width="1" height="1"/><rect x="35" y="151" width="1" height="1"/><rect x="35" y="153" width="1" height="1"/><rect x="35" y="155" width="1" height="1"/><rect x="35" y="157" width="1" height="1"/><rect x="35" y="159" width="1" height="1"/><rect x="35" y="161" width="1" height="1"/><rect x="35" y="163" width="1" height="1"/><rect x="35" y="165" width="1" height="1"/><rect x="35" y="167" width="1" height="1"/><rect x="35" y="169" width="1" height="1"/><rect x="35" y="171" width="1" height="1"/><rect x="35" y="173" width="1" height="1"/><rect x="35" y="175" width="1" height="1"/><rect x="35" y="177" width="1" height="1"/><rect x="35" y="179" width="1" height="1"/><rect x="35" y="181" width="1" height="1"/><rect x="35" y="183" width="1" height="1"/><rect x="35" y="185" width="1" height="1"/><rect x="35" y="187" width="1" height="1"/><rect x="35" y="189" width="1" height="1"/><rect x="35" y="191" width="1" height="1"/><rect x="35" y="193" width="1" height="1"/><rect x="35" y="195" width="1" height="1"/><rect x="35" y="197" width="1" height="1"/><rect x="35" y="199" width="1" height="1"/><rect x="35" y="201" width="1" height="1"/><rect x="35" y="203" width="1" height="1"/><rect x="35" y="205" width="1" height="1"/><rect x="35" y="207" width="1" height="1"/><rect x="35" y="209" width="1" height="1"/><rect x="35" y="211" width="1" height="1"/><rect x="35" y="213" width="1" height="1"/><rect x="35" y="215" width="1" height="1"/><rect x="35" y="217" width="1" height="1"/><rect x="35" y="241" width="1" height="1"/><rect x="35" y="243" width="1" height="1"/><rect x="35" y="245" width="1" height="1"/><rect x="35" y="247" width="1" height="1"/><rect x="35" y="249" width="1" height="1"/><rect x="35" y="251" width="1" height="1"/><rect x="35" y="253" width="1" height="1"/><rect x="35" y="255" width="1" height="1"/><rect x="35" y="257" width="1" height="1"/><rect x="35" y="259" width="1" height="1"/><rect x="35" y="261" width="1" height="1"/><rect x="35" y="263" width="1" height="1"/><rect x="35" y="265" width="1" height="1"/><rect x="35" y="267" width="1" height="1"/><rect x="35" y="269" width="1" height="1"/><rect x="35" y="271" width="1" height="1"/><rect x="35" y="273" width="1" height="1"/><rect x="35" y="275" width="1" height="1"/><rect x="35" y="277" width="1" height="1"/><rect x="35" y="279" width="1" height="1"/><rect x="35" y="281" width="1" height="1"/><rect x="35" y="283" width="1" height="1"/><rect x="35" y="285" width="1" height="1"/><rect x="35" y="287" width="1" height="1"/><rect x="35" y="289" width="1" height="1"/><rect x="35" y="291" width="1" height="1"/><rect x="35" y="293" width="1" height="1"/><rect x="35" y="295" width="1" height="1"/><rect x="35" y="297" width="1" height="1"/><rect x="35" y="299" width="1" height="1"/><rect x="35" y="301" width="1" height="1"/><rect x="35" y="303" width="1" height="1"/><rect x="35" y="305" width="1" height="1"/><rect x="35" y="307" width="1" height="1"/><rect x="35" y="309" width="1" height="1"/><rect x="35" y="311" width="1" height="1"/><rect x="35" y="313" width="1" height="1"/><rect x="35" y="315" width="1" height="1"/><rect x="35" y="317" width="1" height="1"/><rect x="35" y="319" width="1" height="1"/><rect x="35" y="321" width="1" height="1"/><rect x="35" y="323" width="1" height="1"/><rect x="35" y="325" width="1" height="1"/><rect x="35" y="327" width="1" height="1"/><rect x="35" y="329" width="1" height="1"/><rect x="16" y="121" width="1" height="1"/><rect x="18" y="121" width="1" height="1"/><rect x="20" y="121" width="1" height="1"/><rect x="22" y="121" width="1" height="1"/><rect x="24" y="121" width="1" height="1"/><rect x="26" y="121" width="1" height="1"/><rect x="36" y="137" width="1" height="1"/><rect x="38" y="137" width="1" height="1"/><rect x="40" y="137" width="1" height="1"/><rect x="42" y="137" width="1" height="1"/><rect x="44" y="137" width="1" height="1"/><rect x="36" y="153" width="1" height="1"/><rect x="38" y="153" width="1" height="1"/><rect x="40" y="153" width="1" height="1"/><rect x="42" y="153" width="1" height="1"/><rect x="44" y="153" width="1" height="1"/><rect x="36" y="169" width="1" height="1"/><rect x="38" y="169" width="1" height="1"/><rect x="40" y="169" width="1" height="1"/><rect x="42" y="169" width="1" height="1"/><rect x="44" y="169" width="1" height="1"/><rect x="36" y="185" width="1" height="1"/><rect x="38" y="185" width="1" height="1"/><rect x="40" y="185" width="1" height="1"/><rect x="42" y="185" width="1" height="1"/><rect x="44" y="185" width="1" height="1"/><rect x="36" y="201" width="1" height="1"/><rect x="38" y="201" width="1" height="1"/><rect x="40" y="201" width="1" height="1"/><rect x="42" y="201" width="1" height="1"/><rect x="44" y="201" width="1" height="1"/><rect x="36" y="217" width="1" height="1"/><rect x="38" y="217" width="1" height="1"/><rect x="40" y="217" width="1" height="1"/><rect x="42" y="217" width="1" height="1"/><rect x="44" y="217" width="1" height="1"/><rect x="16" y="233" width="1" height="1"/><rect x="18" y="233" width="1" height="1"/><rect x="20" y="233" width="1" height="1"/><rect x="22" y="233" width="1" height="1"/><rect x="24" y="233" width="1" height="1"/><rect x="26" y="233" width="1" height="1"/><rect x="36" y="249" width="1" height="1"/><rect x="38" y="249" width="1" height="1"/><rect x="40" y="249" width="1" height="1"/><rect x="42" y="249" width="1" height="1"/><rect x="44" y="249" width="1" height="1"/><rect x="36" y="265" width="1" height="1"/><rect x="38" y="265" width="1" height="1"/><rect x="40" y="265" width="1" height="1"/><rect x="42" y="265" width="1" height="1"/><rect x="44" y="265" width="1" height="1"/><rect x="36" y="281" width="1" height="1"/><rect x="38" y="281" width="1" height="1"/><rect x="40" y="281" width="1" height="1"/><rect x="42" y="281" width="1" height="1"/><rect x="44" y="281" width="1" height="1"/><rect x="36" y="297" width="1" height="1"/><rect x="38" y="297" width="1" height="1"/><rect x="40" y="297" width="1" height="1"/><rect x="42" y="297" width="1" height="1"/><rect x="44" y="297" width="1" height="1"/><rect x="36" y="313" width="1" height="1"/><rect x="38" y="313" width="1" height="1"/><rect x="40" y="313" width="1" height="1"/><rect x="42" y="313" width="1" height="1"/><rect x="44" y="313" width="1" height="1"/><rect x="36" y="329" width="1" height="1"/><rect x="38" y="329" width="1" height="1"/><rect x="40" y="329" width="1" height="1"/><rect x="42" y="329" width="1" height="1"/><rect x="44" y="329" width="1" height="1"/></svg>
<svg class="ic" style="left:7px;top:96px" width="16" height="16"><use href="#fold"/></svg>
<div class="t" style="left:29px;top:99px;letter-spacing:-0.2px">WLANmonitor (12)</div>
<div class="a" style="left:12px;top:117px;width:9px;height:9px;border:1px solid #a0a0a0;background:#fff"><div class="a" style="left:1px;top:3px;width:5px;height:1px;background:#000"></div></div>
<svg class="ic" style="left:26px;top:112px" width="16" height="16"><use href="#fold"/></svg>
<div class="t" style="left:47px;top:115px;letter-spacing:-0.2px">Rogue AP Detection</div>
<svg class="ic" style="left:45px;top:128px" width="17" height="16"><use href="#foldo"/></svg>
<div class="a" style="left:65px;top:129px;width:63px;height:16px;background:#0a246a;outline:1px dotted #e0d080;outline-offset:-1px"></div>
<div class="t" style="left:67px;top:131px;color:#fff;letter-spacing:-0.3px">All APs (111)</div>
<svg class="ic" style="left:45px;top:144px" width="16" height="16"><use href="#fold"/></svg>
<div class="t" style="left:67px;top:147px;letter-spacing:-0.2px">New APs</div>
<svg class="ic" style="left:45px;top:160px" width="16" height="16"><use href="#fold"/></svg>
<div class="t" style="left:67px;top:163px;letter-spacing:-0.2px">Rogue APs</div>
<svg class="ic" style="left:45px;top:176px" width="16" height="16"><use href="#fold"/></svg>
<div class="t" style="left:67px;top:179px;letter-spacing:-0.2px">Unknown APs</div>
<svg class="ic" style="left:45px;top:192px" width="16" height="16"><use href="#fold"/></svg>
<div class="t" style="left:67px;top:195px;letter-spacing:-0.2px">Known APs</div>
<svg class="ic" style="left:45px;top:208px" width="16" height="16"><use href="#fold"/></svg>
<div class="t" style="left:67px;top:211px;letter-spacing:-0.2px">Own APs</div>
<div class="a" style="left:12px;top:229px;width:9px;height:9px;border:1px solid #a0a0a0;background:#fff"><div class="a" style="left:1px;top:3px;width:5px;height:1px;background:#000"></div></div>
<svg class="ic" style="left:26px;top:224px" width="16" height="16"><use href="#fold"/></svg>
<div class="t" style="left:47px;top:227px;letter-spacing:-0.2px">Rogue Client Detection</div>
<svg class="ic" style="left:45px;top:240px" width="16" height="16"><use href="#fold"/></svg>
<div class="t" style="left:67px;top:243px;letter-spacing:-0.2px">All Clients (2)</div>
<svg class="ic" style="left:45px;top:256px" width="16" height="16"><use href="#fold"/></svg>
<div class="t" style="left:67px;top:259px;letter-spacing:-0.2px">New Clients (1)</div>
<svg class="ic" style="left:45px;top:272px" width="16" height="16"><use href="#fold"/></svg>
<div class="t" style="left:67px;top:275px;letter-spacing:-0.2px">Rogue Clients</div>
<svg class="ic" style="left:45px;top:288px" width="16" height="16"><use href="#fold"/></svg>
<div class="t" style="left:67px;top:291px;letter-spacing:-0.2px">Unknown Clients</div>
<svg class="ic" style="left:45px;top:304px" width="16" height="16"><use href="#fold"/></svg>
<div class="t" style="left:67px;top:307px;letter-spacing:-0.2px">Known Clients</div>
<svg class="ic" style="left:45px;top:320px" width="16" height="16"><use href="#fold"/></svg>
<div class="t" style="left:67px;top:323px;letter-spacing:-0.2px">Own Clients</div>
<div class="a" style="left:4px;top:684px;width:489px;height:18px;border-top:1px solid #808080;border-left:1px solid #808080;border-right:1px solid #fff;border-bottom:1px solid #fff"></div>
<div class="t" style="left:6px;top:687px;letter-spacing:-0.3px">WLANmonitor</div>
<div class="a" style="left:495px;top:684px;width:647px;height:18px;border-top:1px solid #808080;border-left:1px solid #808080;border-right:1px solid #fff;border-bottom:1px solid #fff"></div>
<svg width="0" height="0" style="position:absolute" shape-rendering="crispEdges"><defs><symbol id="rtr" viewBox="0 0 16 16"><rect x="8" y="1" width="1" height="1" fill="#000000"/><rect x="8" y="2" width="1" height="1" fill="#000000"/><rect x="14" y="2" width="1" height="1" fill="#000000"/><rect x="8" y="3" width="1" height="1" fill="#000000"/><rect x="14" y="3" width="1" height="1" fill="#000000"/><rect x="5" y="4" width="2" height="1" fill="#c0c0c0"/><rect x="7" y="4" width="1" height="1" fill="#ff0000"/><rect x="8" y="4" width="1" height="1" fill="#000000"/><rect x="9" y="4" width="1" height="1" fill="#ff0000"/><rect x="14" y="4" width="1" height="1" fill="#000000"/><rect x="2" y="5" width="2" height="1" fill="#c0c0c0"/><rect x="4" y="5" width="7" height="1" fill="#ff0000"/><rect x="11" y="5" width="1" height="1" fill="#c0c0c0"/><rect x="14" y="5" width="1" height="1" fill="#000000"/><rect x="0" y="6" width="1" height="1" fill="#808080"/><rect x="1" y="6" width="1" height="1" fill="#c0c0c0"/><rect x="2" y="6" width="11" height="1" fill="#ff0000"/><rect x="13" y="6" width="1" height="1" fill="#c0c0c0"/><rect x="14" y="6" width="1" height="1" fill="#000000"/><rect x="0" y="7" width="1" height="1" fill="#808080"/><rect x="1" y="7" width="1" height="1" fill="#e8e8e8"/><rect x="2" y="7" width="13" height="1" fill="#ff0000"/><rect x="15" y="7" width="1" height="1" fill="#000000"/><rect x="0" y="8" width="1" height="1" fill="#808080"/><rect x="1" y="8" width="1" height="1" fill="#e8e8e8"/><rect x="2" y="8" width="2" height="1" fill="#008000"/><rect x="4" y="8" width="10" height="1" fill="#ff0000"/><rect x="14" y="8" width="1" height="1" fill="#808080"/><rect x="15" y="8" width="1" height="1" fill="#000000"/><rect x="0" y="9" width="1" height="1" fill="#808080"/><rect x="1" y="9" width="1" height="1" fill="#e8e8e8"/><rect x="2" y="9" width="1" height="1" fill="#008000"/><rect x="3" y="9" width="2" height="1" fill="#00ff00"/><rect x="5" y="9" width="1" height="1" fill="#e8e8e8"/><rect x="6" y="9" width="4" height="1" fill="#ff0000"/><rect x="10" y="9" width="5" height="1" fill="#808080"/><rect x="15" y="9" width="1" height="1" fill="#000000"/><rect x="0" y="10" width="1" height="1" fill="#808080"/><rect x="1" y="10" width="2" height="1" fill="#e8e8e8"/><rect x="3" y="10" width="3" height="1" fill="#00ff00"/><rect x="6" y="10" width="1" height="1" fill="#e8e8e8"/><rect x="7" y="10" width="2" height="1" fill="#ff0000"/><rect x="9" y="10" width="1" height="1" fill="#e8e8e8"/><rect x="10" y="10" width="5" height="1" fill="#808080"/><rect x="15" y="10" width="1" height="1" fill="#000000"/><rect x="1" y="11" width="2" height="1" fill="#000000"/><rect x="3" y="11" width="1" height="1" fill="#e8e8e8"/><rect x="4" y="11" width="2" height="1" fill="#00ff00"/><rect x="6" y="11" width="2" height="1" fill="#e8e8e8"/><rect x="8" y="11" width="1" height="1" fill="#ff0000"/><rect x="9" y="11" width="1" height="1" fill="#e8e8e8"/><rect x="10" y="11" width="5" height="1" fill="#808080"/><rect x="15" y="11" width="1" height="1" fill="#000000"/><rect x="3" y="12" width="2" height="1" fill="#000000"/><rect x="5" y="12" width="2" height="1" fill="#e8e8e8"/><rect x="7" y="12" width="2" height="1" fill="#ff0000"/><rect x="9" y="12" width="1" height="1" fill="#e8e8e8"/><rect x="10" y="12" width="5" height="1" fill="#808080"/><rect x="15" y="12" width="1" height="1" fill="#000000"/><rect x="5" y="13" width="2" height="1" fill="#000000"/><rect x="7" y="13" width="2" height="1" fill="#e8e8e8"/><rect x="9" y="13" width="1" height="1" fill="#ff0000"/><rect x="10" y="13" width="3" height="1" fill="#808080"/><rect x="13" y="13" width="2" height="1" fill="#000000"/><rect x="7" y="14" width="2" height="1" fill="#000000"/><rect x="9" y="14" width="1" height="1" fill="#ff0000"/><rect x="10" y="14" width="1" height="1" fill="#808080"/><rect x="11" y="14" width="2" height="1" fill="#000000"/><rect x="9" y="15" width="2" height="1" fill="#000000"/></symbol><symbol id="rty" viewBox="0 0 16 16"><rect x="8" y="1" width="1" height="1" fill="#000000"/><rect x="8" y="2" width="1" height="1" fill="#000000"/><rect x="14" y="2" width="1" height="1" fill="#000000"/><rect x="8" y="3" width="1" height="1" fill="#000000"/><rect x="14" y="3" width="1" height="1" fill="#000000"/><rect x="5" y="4" width="2" height="1" fill="#c0c0c0"/><rect x="7" y="4" width="1" height="1" fill="#ffff00"/><rect x="8" y="4" width="1" height="1" fill="#000000"/><rect x="9" y="4" width="1" height="1" fill="#ffff00"/><rect x="14" y="4" width="1" height="1" fill="#000000"/><rect x="2" y="5" width="2" height="1" fill="#c0c0c0"/><rect x="4" y="5" width="7" height="1" fill="#ffff00"/><rect x="11" y="5" width="1" height="1" fill="#c0c0c0"/><rect x="14" y="5" width="1" height="1" fill="#000000"/><rect x="0" y="6" width="1" height="1" fill="#808080"/><rect x="1" y="6" width="1" height="1" fill="#c0c0c0"/><rect x="2" y="6" width="11" height="1" fill="#ffff00"/><rect x="13" y="6" width="1" height="1" fill="#c0c0c0"/><rect x="14" y="6" width="1" height="1" fill="#000000"/><rect x="0" y="7" width="1" height="1" fill="#808080"/><rect x="1" y="7" width="1" height="1" fill="#e8e8e8"/><rect x="2" y="7" width="13" height="1" fill="#ffff00"/><rect x="15" y="7" width="1" height="1" fill="#000000"/><rect x="0" y="8" width="1" height="1" fill="#808080"/><rect x="1" y="8" width="1" height="1" fill="#e8e8e8"/><rect x="2" y="8" width="2" height="1" fill="#008000"/><rect x="4" y="8" width="10" height="1" fill="#ffff00"/><rect x="14" y="8" width="1" height="1" fill="#808080"/><rect x="15" y="8" width="1" height="1" fill="#000000"/><rect x="0" y="9" width="1" height="1" fill="#808080"/><rect x="1" y="9" width="1" height="1" fill="#e8e8e8"/><rect x="2" y="9" width="1" height="1" fill="#008000"/><rect x="3" y="9" width="2" height="1" fill="#00ff00"/><rect x="5" y="9" width="1" height="1" fill="#e8e8e8"/><rect x="6" y="9" width="4" height="1" fill="#ffff00"/><rect x="10" y="9" width="5" height="1" fill="#808080"/><rect x="15" y="9" width="1" height="1" fill="#000000"/><rect x="0" y="10" width="1" height="1" fill="#808080"/><rect x="1" y="10" width="2" height="1" fill="#e8e8e8"/><rect x="3" y="10" width="3" height="1" fill="#00ff00"/><rect x="6" y="10" width="1" height="1" fill="#e8e8e8"/><rect x="7" y="10" width="2" height="1" fill="#ffff00"/><rect x="9" y="10" width="1" height="1" fill="#e8e8e8"/><rect x="10" y="10" width="5" height="1" fill="#808080"/><rect x="15" y="10" width="1" height="1" fill="#000000"/><rect x="1" y="11" width="2" height="1" fill="#000000"/><rect x="3" y="11" width="1" height="1" fill="#e8e8e8"/><rect x="4" y="11" width="2" height="1" fill="#00ff00"/><rect x="6" y="11" width="2" height="1" fill="#e8e8e8"/><rect x="8" y="11" width="1" height="1" fill="#ff0000"/><rect x="9" y="11" width="1" height="1" fill="#e8e8e8"/><rect x="10" y="11" width="5" height="1" fill="#808080"/><rect x="15" y="11" width="1" height="1" fill="#000000"/><rect x="3" y="12" width="2" height="1" fill="#000000"/><rect x="5" y="12" width="2" height="1" fill="#e8e8e8"/><rect x="7" y="12" width="2" height="1" fill="#ff0000"/><rect x="9" y="12" width="1" height="1" fill="#e8e8e8"/><rect x="10" y="12" width="5" height="1" fill="#808080"/><rect x="15" y="12" width="1" height="1" fill="#000000"/><rect x="5" y="13" width="2" height="1" fill="#000000"/><rect x="7" y="13" width="2" height="1" fill="#e8e8e8"/><rect x="9" y="13" width="1" height="1" fill="#ff0000"/><rect x="10" y="13" width="3" height="1" fill="#808080"/><rect x="13" y="13" width="2" height="1" fill="#000000"/><rect x="7" y="14" width="2" height="1" fill="#000000"/><rect x="9" y="14" width="1" height="1" fill="#ff0000"/><rect x="10" y="14" width="1" height="1" fill="#808080"/><rect x="11" y="14" width="2" height="1" fill="#000000"/><rect x="9" y="15" width="2" height="1" fill="#000000"/></symbol><symbol id="rtg" viewBox="0 0 16 16"><rect x="8" y="1" width="1" height="1" fill="#000000"/><rect x="8" y="2" width="1" height="1" fill="#000000"/><rect x="14" y="2" width="1" height="1" fill="#000000"/><rect x="8" y="3" width="1" height="1" fill="#000000"/><rect x="14" y="3" width="1" height="1" fill="#000000"/><rect x="5" y="4" width="2" height="1" fill="#c0c0c0"/><rect x="7" y="4" width="1" height="1" fill="#c8c8c8"/><rect x="8" y="4" width="1" height="1" fill="#000000"/><rect x="9" y="4" width="1" height="1" fill="#c8c8c8"/><rect x="14" y="4" width="1" height="1" fill="#000000"/><rect x="2" y="5" width="2" height="1" fill="#c0c0c0"/><rect x="4" y="5" width="7" height="1" fill="#c8c8c8"/><rect x="11" y="5" width="1" height="1" fill="#c0c0c0"/><rect x="14" y="5" width="1" height="1" fill="#000000"/><rect x="0" y="6" width="1" height="1" fill="#808080"/><rect x="1" y="6" width="1" height="1" fill="#c0c0c0"/><rect x="2" y="6" width="11" height="1" fill="#c8c8c8"/><rect x="13" y="6" width="1" height="1" fill="#c0c0c0"/><rect x="14" y="6" width="1" height="1" fill="#000000"/><rect x="0" y="7" width="1" height="1" fill="#808080"/><rect x="1" y="7" width="1" height="1" fill="#e8e8e8"/><rect x="2" y="7" width="13" height="1" fill="#c8c8c8"/><rect x="15" y="7" width="1" height="1" fill="#000000"/><rect x="0" y="8" width="1" height="1" fill="#808080"/><rect x="1" y="8" width="1" height="1" fill="#e8e8e8"/><rect x="2" y="8" width="2" height="1" fill="#008000"/><rect x="4" y="8" width="10" height="1" fill="#c8c8c8"/><rect x="14" y="8" width="1" height="1" fill="#808080"/><rect x="15" y="8" width="1" height="1" fill="#000000"/><rect x="0" y="9" width="1" height="1" fill="#808080"/><rect x="1" y="9" width="1" height="1" fill="#e8e8e8"/><rect x="2" y="9" width="1" height="1" fill="#008000"/><rect x="3" y="9" width="2" height="1" fill="#00ff00"/><rect x="5" y="9" width="1" height="1" fill="#e8e8e8"/><rect x="6" y="9" width="4" height="1" fill="#c8c8c8"/><rect x="10" y="9" width="5" height="1" fill="#808080"/><rect x="15" y="9" width="1" height="1" fill="#000000"/><rect x="0" y="10" width="1" height="1" fill="#808080"/><rect x="1" y="10" width="2" height="1" fill="#e8e8e8"/><rect x="3" y="10" width="3" height="1" fill="#00ff00"/><rect x="6" y="10" width="1" height="1" fill="#e8e8e8"/><rect x="7" y="10" width="2" height="1" fill="#c8c8c8"/><rect x="9" y="10" width="1" height="1" fill="#e8e8e8"/><rect x="10" y="10" width="5" height="1" fill="#808080"/><rect x="15" y="10" width="1" height="1" fill="#000000"/><rect x="1" y="11" width="2" height="1" fill="#000000"/><rect x="3" y="11" width="1" height="1" fill="#e8e8e8"/><rect x="4" y="11" width="2" height="1" fill="#00ff00"/><rect x="6" y="11" width="2" height="1" fill="#e8e8e8"/><rect x="8" y="11" width="1" height="1" fill="#ff0000"/><rect x="9" y="11" width="1" height="1" fill="#e8e8e8"/><rect x="10" y="11" width="5" height="1" fill="#808080"/><rect x="15" y="11" width="1" height="1" fill="#000000"/><rect x="3" y="12" width="2" height="1" fill="#000000"/><rect x="5" y="12" width="2" height="1" fill="#e8e8e8"/><rect x="7" y="12" width="2" height="1" fill="#ff0000"/><rect x="9" y="12" width="1" height="1" fill="#e8e8e8"/><rect x="10" y="12" width="5" height="1" fill="#808080"/><rect x="15" y="12" width="1" height="1" fill="#000000"/><rect x="5" y="13" width="2" height="1" fill="#000000"/><rect x="7" y="13" width="2" height="1" fill="#e8e8e8"/><rect x="9" y="13" width="1" height="1" fill="#ff0000"/><rect x="10" y="13" width="3" height="1" fill="#808080"/><rect x="13" y="13" width="2" height="1" fill="#000000"/><rect x="7" y="14" width="2" height="1" fill="#000000"/><rect x="9" y="14" width="1" height="1" fill="#ff0000"/><rect x="10" y="14" width="1" height="1" fill="#808080"/><rect x="11" y="14" width="2" height="1" fill="#000000"/><rect x="9" y="15" width="2" height="1" fill="#000000"/></symbol><symbol id="rtn" viewBox="0 0 16 16"><rect x="8" y="1" width="1" height="1" fill="#000000"/><rect x="8" y="2" width="1" height="1" fill="#000000"/><rect x="14" y="2" width="1" height="1" fill="#000000"/><rect x="8" y="3" width="1" height="1" fill="#000000"/><rect x="14" y="3" width="1" height="1" fill="#000000"/><rect x="5" y="4" width="2" height="1" fill="#c0c0c0"/><rect x="7" y="4" width="1" height="1" fill="#00ff00"/><rect x="8" y="4" width="1" height="1" fill="#000000"/><rect x="9" y="4" width="1" height="1" fill="#00ff00"/><rect x="14" y="4" width="1" height="1" fill="#000000"/><rect x="2" y="5" width="2" height="1" fill="#c0c0c0"/><rect x="4" y="5" width="7" height="1" fill="#00ff00"/><rect x="11" y="5" width="1" height="1" fill="#c0c0c0"/><rect x="14" y="5" width="1" height="1" fill="#000000"/><rect x="0" y="6" width="1" height="1" fill="#808080"/><rect x="1" y="6" width="1" height="1" fill="#c0c0c0"/><rect x="2" y="6" width="11" height="1" fill="#00ff00"/><rect x="13" y="6" width="1" height="1" fill="#c0c0c0"/><rect x="14" y="6" width="1" height="1" fill="#000000"/><rect x="0" y="7" width="1" height="1" fill="#808080"/><rect x="1" y="7" width="1" height="1" fill="#e8e8e8"/><rect x="2" y="7" width="13" height="1" fill="#00ff00"/><rect x="15" y="7" width="1" height="1" fill="#000000"/><rect x="0" y="8" width="1" height="1" fill="#808080"/><rect x="1" y="8" width="1" height="1" fill="#e8e8e8"/><rect x="2" y="8" width="2" height="1" fill="#006000"/><rect x="4" y="8" width="10" height="1" fill="#00ff00"/><rect x="14" y="8" width="1" height="1" fill="#808080"/><rect x="15" y="8" width="1" height="1" fill="#000000"/><rect x="0" y="9" width="1" height="1" fill="#808080"/><rect x="1" y="9" width="1" height="1" fill="#e8e8e8"/><rect x="2" y="9" width="1" height="1" fill="#006000"/><rect x="3" y="9" width="2" height="1" fill="#00a000"/><rect x="5" y="9" width="1" height="1" fill="#e8e8e8"/><rect x="6" y="9" width="4" height="1" fill="#00ff00"/><rect x="10" y="9" width="5" height="1" fill="#808080"/><rect x="15" y="9" width="1" height="1" fill="#000000"/><rect x="0" y="10" width="1" height="1" fill="#808080"/><rect x="1" y="10" width="2" height="1" fill="#e8e8e8"/><rect x="3" y="10" width="3" height="1" fill="#00a000"/><rect x="6" y="10" width="1" height="1" fill="#e8e8e8"/><rect x="7" y="10" width="2" height="1" fill="#00ff00"/><rect x="9" y="10" width="1" height="1" fill="#e8e8e8"/><rect x="10" y="10" width="5" height="1" fill="#808080"/><rect x="15" y="10" width="1" height="1" fill="#000000"/><rect x="1" y="11" width="2" height="1" fill="#000000"/><rect x="3" y="11" width="1" height="1" fill="#e8e8e8"/><rect x="4" y="11" width="2" height="1" fill="#00a000"/><rect x="6" y="11" width="2" height="1" fill="#e8e8e8"/><rect x="8" y="11" width="1" height="1" fill="#ff0000"/><rect x="9" y="11" width="1" height="1" fill="#e8e8e8"/><rect x="10" y="11" width="5" height="1" fill="#808080"/><rect x="15" y="11" width="1" height="1" fill="#000000"/><rect x="3" y="12" width="2" height="1" fill="#000000"/><rect x="5" y="12" width="2" height="1" fill="#e8e8e8"/><rect x="7" y="12" width="2" height="1" fill="#ff0000"/><rect x="9" y="12" width="1" height="1" fill="#e8e8e8"/><rect x="10" y="12" width="5" height="1" fill="#808080"/><rect x="15" y="12" width="1" height="1" fill="#000000"/><rect x="5" y="13" width="2" height="1" fill="#000000"/><rect x="7" y="13" width="2" height="1" fill="#e8e8e8"/><rect x="9" y="13" width="1" height="1" fill="#ff0000"/><rect x="10" y="13" width="3" height="1" fill="#808080"/><rect x="13" y="13" width="2" height="1" fill="#000000"/><rect x="7" y="14" width="2" height="1" fill="#000000"/><rect x="9" y="14" width="1" height="1" fill="#ff0000"/><rect x="10" y="14" width="1" height="1" fill="#808080"/><rect x="11" y="14" width="2" height="1" fill="#000000"/><rect x="9" y="15" width="2" height="1" fill="#000000"/></symbol><symbol id="fold" viewBox="0 0 16 16"><rect x="3" y="2" width="5" height="1" fill="#c0c0c0"/><rect x="2" y="3" width="1" height="1" fill="#c0c0c0"/><rect x="3" y="3" width="1" height="1" fill="#ffff00"/><rect x="4" y="3" width="1" height="1" fill="#c0c0c0"/><rect x="5" y="3" width="1" height="1" fill="#ffff00"/><rect x="6" y="3" width="1" height="1" fill="#c0c0c0"/><rect x="7" y="3" width="1" height="1" fill="#ffff00"/><rect x="8" y="3" width="1" height="1" fill="#c0c0c0"/><rect x="1" y="4" width="1" height="1" fill="#808080"/><rect x="2" y="4" width="1" height="1" fill="#ffff00"/><rect x="3" y="4" width="1" height="1" fill="#c0c0c0"/><rect x="4" y="4" width="1" height="1" fill="#ffff00"/><rect x="5" y="4" width="1" height="1" fill="#c0c0c0"/><rect x="6" y="4" width="1" height="1" fill="#ffff00"/><rect x="7" y="4" width="1" height="1" fill="#c0c0c0"/><rect x="8" y="4" width="1" height="1" fill="#ffff00"/><rect x="9" y="4" width="6" height="1" fill="#808080"/><rect x="1" y="5" width="1" height="1" fill="#808080"/><rect x="2" y="5" width="13" height="1" fill="#ffffff"/><rect x="15" y="5" width="1" height="1" fill="#000000"/><rect x="1" y="6" width="1" height="1" fill="#808080"/><rect x="2" y="6" width="1" height="1" fill="#ffffff"/><rect x="3" y="6" width="1" height="1" fill="#c0c0c0"/><rect x="4" y="6" width="1" height="1" fill="#ffff00"/><rect x="5" y="6" width="1" height="1" fill="#c0c0c0"/><rect x="6" y="6" width="1" height="1" fill="#ffff00"/><rect x="7" y="6" width="1" height="1" fill="#c0c0c0"/><rect x="8" y="6" width="1" height="1" fill="#ffff00"/><rect x="9" y="6" width="1" height="1" fill="#c0c0c0"/><rect x="10" y="6" width="1" height="1" fill="#ffff00"/><rect x="11" y="6" width="1" height="1" fill="#c0c0c0"/><rect x="12" y="6" width="1" height="1" fill="#ffff00"/><rect x="13" y="6" width="1" height="1" fill="#c0c0c0"/><rect x="14" y="6" width="1" height="1" fill="#ffff00"/><rect x="15" y="6" width="1" height="1" fill="#000000"/><rect x="1" y="7" width="1" height="1" fill="#808080"/><rect x="2" y="7" width="1" height="1" fill="#ffffff"/><rect x="3" y="7" width="1" height="1" fill="#ffff00"/><rect x="4" y="7" width="1" height="1" fill="#c0c0c0"/><rect x="5" y="7" width="1" height="1" fill="#ffff00"/><rect x="6" y="7" width="1" height="1" fill="#c0c0c0"/><rect x="7" y="7" width="1" height="1" fill="#ffff00"/><rect x="8" y="7" width="1" height="1" fill="#c0c0c0"/><rect x="9" y="7" width="1" height="1" fill="#ffff00"/><rect x="10" y="7" width="1" height="1" fill="#c0c0c0"/><rect x="11" y="7" width="1" height="1" fill="#ffff00"/><rect x="12" y="7" width="1" height="1" fill="#c0c0c0"/><rect x="13" y="7" width="1" height="1" fill="#ffff00"/><rect x="14" y="7" width="1" height="1" fill="#c0c0c0"/><rect x="15" y="7" width="1" height="1" fill="#000000"/><rect x="1" y="8" width="1" height="1" fill="#808080"/><rect x="2" y="8" width="1" height="1" fill="#ffffff"/><rect x="3" y="8" width="1" height="1" fill="#c0c0c0"/><rect x="4" y="8" width="1" height="1" fill="#ffff00"/><rect x="5" y="8" width="1" height="1" fill="#c0c0c0"/><rect x="6" y="8" width="1" height="1" fill="#ffff00"/><rect x="7" y="8" width="1" height="1" fill="#c0c0c0"/><rect x="8" y="8" width="1" height="1" fill="#ffff00"/><rect x="9" y="8" width="1" height="1" fill="#c0c0c0"/><rect x="10" y="8" width="1" height="1" fill="#ffff00"/><rect x="11" y="8" width="1" height="1" fill="#c0c0c0"/><rect x="12" y="8" width="1" height="1" fill="#ffff00"/><rect x="13" y="8" width="1" height="1" fill="#c0c0c0"/><rect x="14" y="8" width="1" height="1" fill="#ffff00"/><rect x="15" y="8" width="1" height="1" fill="#000000"/><rect x="1" y="9" width="1" height="1" fill="#808080"/><rect x="2" y="9" width="1" height="1" fill="#ffffff"/><rect x="3" y="9" width="1" height="1" fill="#ffff00"/><rect x="4" y="9" width="1" height="1" fill="#c0c0c0"/><rect x="5" y="9" width="1" height="1" fill="#ffff00"/><rect x="6" y="9" width="1" height="1" fill="#c0c0c0"/><rect x="7" y="9" width="1" height="1" fill="#ffff00"/><rect x="8" y="9" width="1" height="1" fill="#c0c0c0"/><rect x="9" y="9" width="1" height="1" fill="#ffff00"/><rect x="10" y="9" width="1" height="1" fill="#c0c0c0"/><rect x="11" y="9" width="1" height="1" fill="#ffff00"/><rect x="12" y="9" width="1" height="1" fill="#c0c0c0"/><rect x="13" y="9" width="1" height="1" fill="#ffff00"/><rect x="14" y="9" width="1" height="1" fill="#c0c0c0"/><rect x="15" y="9" width="1" height="1" fill="#000000"/><rect x="1" y="10" width="1" height="1" fill="#808080"/><rect x="2" y="10" width="1" height="1" fill="#ffffff"/><rect x="3" y="10" width="1" height="1" fill="#c0c0c0"/><rect x="4" y="10" width="1" height="1" fill="#ffff00"/><rect x="5" y="10" width="1" height="1" fill="#c0c0c0"/><rect x="6" y="10" width="1" height="1" fill="#ffff00"/><rect x="7" y="10" width="1" height="1" fill="#c0c0c0"/><rect x="8" y="10" width="1" height="1" fill="#ffff00"/><rect x="9" y="10" width="1" height="1" fill="#c0c0c0"/><rect x="10" y="10" width="1" height="1" fill="#ffff00"/><rect x="11" y="10" width="1" height="1" fill="#c0c0c0"/><rect x="12" y="10" width="1" height="1" fill="#ffff00"/><rect x="13" y="10" width="1" height="1" fill="#c0c0c0"/><rect x="14" y="10" width="1" height="1" fill="#ffff00"/><rect x="15" y="10" width="1" height="1" fill="#000000"/><rect x="1" y="11" width="1" height="1" fill="#808080"/><rect x="2" y="11" width="1" height="1" fill="#ffffff"/><rect x="3" y="11" width="1" height="1" fill="#ffff00"/><rect x="4" y="11" width="1" height="1" fill="#c0c0c0"/><rect x="5" y="11" width="1" height="1" fill="#ffff00"/><rect x="6" y="11" width="1" height="1" fill="#c0c0c0"/><rect x="7" y="11" width="1" height="1" fill="#ffff00"/><rect x="8" y="11" width="1" height="1" fill="#c0c0c0"/><rect x="9" y="11" width="1" height="1" fill="#ffff00"/><rect x="10" y="11" width="1" height="1" fill="#c0c0c0"/><rect x="11" y="11" width="1" height="1" fill="#ffff00"/><rect x="12" y="11" width="1" height="1" fill="#c0c0c0"/><rect x="13" y="11" width="1" height="1" fill="#ffff00"/><rect x="14" y="11" width="1" height="1" fill="#c0c0c0"/><rect x="15" y="11" width="1" height="1" fill="#000000"/><rect x="1" y="12" width="1" height="1" fill="#808080"/><rect x="2" y="12" width="1" height="1" fill="#ffffff"/><rect x="3" y="12" width="1" height="1" fill="#c0c0c0"/><rect x="4" y="12" width="1" height="1" fill="#ffff00"/><rect x="5" y="12" width="1" height="1" fill="#c0c0c0"/><rect x="6" y="12" width="1" height="1" fill="#ffff00"/><rect x="7" y="12" width="1" height="1" fill="#c0c0c0"/><rect x="8" y="12" width="1" height="1" fill="#ffff00"/><rect x="9" y="12" width="1" height="1" fill="#c0c0c0"/><rect x="10" y="12" width="1" height="1" fill="#ffff00"/><rect x="11" y="12" width="1" height="1" fill="#c0c0c0"/><rect x="12" y="12" width="1" height="1" fill="#ffff00"/><rect x="13" y="12" width="1" height="1" fill="#c0c0c0"/><rect x="14" y="12" width="1" height="1" fill="#ffff00"/><rect x="15" y="12" width="1" height="1" fill="#000000"/><rect x="1" y="13" width="1" height="1" fill="#808080"/><rect x="2" y="13" width="1" height="1" fill="#ffffff"/><rect x="3" y="13" width="1" height="1" fill="#ffff00"/><rect x="4" y="13" width="1" height="1" fill="#c0c0c0"/><rect x="5" y="13" width="1" height="1" fill="#ffff00"/><rect x="6" y="13" width="1" height="1" fill="#c0c0c0"/><rect x="7" y="13" width="1" height="1" fill="#ffff00"/><rect x="8" y="13" width="1" height="1" fill="#c0c0c0"/><rect x="9" y="13" width="1" height="1" fill="#ffff00"/><rect x="10" y="13" width="1" height="1" fill="#c0c0c0"/><rect x="11" y="13" width="1" height="1" fill="#ffff00"/><rect x="12" y="13" width="1" height="1" fill="#c0c0c0"/><rect x="13" y="13" width="1" height="1" fill="#ffff00"/><rect x="14" y="13" width="1" height="1" fill="#c0c0c0"/><rect x="15" y="13" width="1" height="1" fill="#000000"/><rect x="2" y="14" width="14" height="1" fill="#000000"/></symbol><symbol id="foldo" viewBox="0 0 17 16"><rect x="4" y="2" width="5" height="1" fill="#c0c0c0"/><rect x="3" y="3" width="1" height="1" fill="#c0c0c0"/><rect x="4" y="3" width="5" height="1" fill="#ffffff"/><rect x="9" y="3" width="1" height="1" fill="#c0c0c0"/><rect x="2" y="4" width="1" height="1" fill="#808080"/><rect x="3" y="4" width="1" height="1" fill="#ffffff"/><rect x="4" y="4" width="1" height="1" fill="#ffff00"/><rect x="5" y="4" width="1" height="1" fill="#c0c0c0"/><rect x="6" y="4" width="1" height="1" fill="#ffff00"/><rect x="7" y="4" width="1" height="1" fill="#c0c0c0"/><rect x="8" y="4" width="1" height="1" fill="#ffff00"/><rect x="9" y="4" width="1" height="1" fill="#ffffff"/><rect x="10" y="4" width="6" height="1" fill="#808080"/><rect x="2" y="5" width="1" height="1" fill="#808080"/><rect x="3" y="5" width="1" height="1" fill="#ffff00"/><rect x="4" y="5" width="1" height="1" fill="#c0c0c0"/><rect x="5" y="5" width="1" height="1" fill="#ffff00"/><rect x="6" y="5" width="1" height="1" fill="#c0c0c0"/><rect x="7" y="5" width="1" height="1" fill="#ffff00"/><rect x="8" y="5" width="1" height="1" fill="#c0c0c0"/><rect x="9" y="5" width="1" height="1" fill="#ffff00"/><rect x="10" y="5" width="1" height="1" fill="#c0c0c0"/><rect x="11" y="5" width="1" height="1" fill="#ffff00"/><rect x="12" y="5" width="1" height="1" fill="#c0c0c0"/><rect x="13" y="5" width="1" height="1" fill="#ffff00"/><rect x="14" y="5" width="1" height="1" fill="#c0c0c0"/><rect x="15" y="5" width="1" height="1" fill="#ffff00"/><rect x="16" y="5" width="1" height="1" fill="#000000"/><rect x="2" y="6" width="1" height="1" fill="#808080"/><rect x="3" y="6" width="1" height="1" fill="#c0c0c0"/><rect x="4" y="6" width="1" height="1" fill="#ffff00"/><rect x="5" y="6" width="1" height="1" fill="#c0c0c0"/><rect x="6" y="6" width="1" height="1" fill="#ffff00"/><rect x="7" y="6" width="1" height="1" fill="#c0c0c0"/><rect x="8" y="6" width="1" height="1" fill="#ffff00"/><rect x="9" y="6" width="1" height="1" fill="#c0c0c0"/><rect x="10" y="6" width="1" height="1" fill="#ffff00"/><rect x="11" y="6" width="1" height="1" fill="#c0c0c0"/><rect x="12" y="6" width="1" height="1" fill="#ffff00"/><rect x="13" y="6" width="1" height="1" fill="#c0c0c0"/><rect x="14" y="6" width="1" height="1" fill="#ffff00"/><rect x="15" y="6" width="1" height="1" fill="#c0c0c0"/><rect x="16" y="6" width="1" height="1" fill="#000000"/><rect x="1" y="7" width="13" height="1" fill="#808080"/><rect x="14" y="7" width="1" height="1" fill="#c0c0c0"/><rect x="15" y="7" width="1" height="1" fill="#ffff00"/><rect x="16" y="7" width="1" height="1" fill="#000000"/><rect x="1" y="8" width="1" height="1" fill="#808080"/><rect x="2" y="8" width="11" height="1" fill="#ffffff"/><rect x="13" y="8" width="1" height="1" fill="#000000"/><rect x="14" y="8" width="1" height="1" fill="#ffff00"/><rect x="15" y="8" width="1" height="1" fill="#c0c0c0"/><rect x="16" y="8" width="1" height="1" fill="#000000"/><rect x="2" y="9" width="1" height="1" fill="#808080"/><rect x="3" y="9" width="1" height="1" fill="#ffff00"/><rect x="4" y="9" width="1" height="1" fill="#c0c0c0"/><rect x="5" y="9" width="1" height="1" fill="#ffff00"/><rect x="6" y="9" width="1" height="1" fill="#c0c0c0"/><rect x="7" y="9" width="1" height="1" fill="#ffff00"/><rect x="8" y="9" width="1" height="1" fill="#c0c0c0"/><rect x="9" y="9" width="1" height="1" fill="#ffff00"/><rect x="10" y="9" width="1" height="1" fill="#c0c0c0"/><rect x="11" y="9" width="1" height="1" fill="#ffff00"/><rect x="12" y="9" width="1" height="1" fill="#c0c0c0"/><rect x="13" y="9" width="1" height="1" fill="#ffff00"/><rect x="14" y="9" width="1" height="1" fill="#000000"/><rect x="15" y="9" width="1" height="1" fill="#ffff00"/><rect x="16" y="9" width="1" height="1" fill="#000000"/><rect x="2" y="10" width="1" height="1" fill="#808080"/><rect x="3" y="10" width="1" height="1" fill="#c0c0c0"/><rect x="4" y="10" width="1" height="1" fill="#ffff00"/><rect x="5" y="10" width="1" height="1" fill="#c0c0c0"/><rect x="6" y="10" width="1" height="1" fill="#ffff00"/><rect x="7" y="10" width="1" height="1" fill="#c0c0c0"/><rect x="8" y="10" width="1" height="1" fill="#ffff00"/><rect x="9" y="10" width="1" height="1" fill="#c0c0c0"/><rect x="10" y="10" width="1" height="1" fill="#ffff00"/><rect x="11" y="10" width="1" height="1" fill="#c0c0c0"/><rect x="12" y="10" width="1" height="1" fill="#ffff00"/><rect x="13" y="10" width="1" height="1" fill="#c0c0c0"/><rect x="14" y="10" width="1" height="1" fill="#ffff00"/><rect x="15" y="10" width="2" height="1" fill="#000000"/><rect x="3" y="11" width="1" height="1" fill="#808080"/><rect x="4" y="11" width="1" height="1" fill="#c0c0c0"/><rect x="5" y="11" width="1" height="1" fill="#ffff00"/><rect x="6" y="11" width="1" height="1" fill="#c0c0c0"/><rect x="7" y="11" width="1" height="1" fill="#ffff00"/><rect x="8" y="11" width="1" height="1" fill="#c0c0c0"/><rect x="9" y="11" width="1" height="1" fill="#ffff00"/><rect x="10" y="11" width="1" height="1" fill="#c0c0c0"/><rect x="11" y="11" width="1" height="1" fill="#ffff00"/><rect x="12" y="11" width="1" height="1" fill="#c0c0c0"/><rect x="13" y="11" width="1" height="1" fill="#ffff00"/><rect x="14" y="11" width="1" height="1" fill="#c0c0c0"/><rect x="15" y="11" width="1" height="1" fill="#ffff00"/><rect x="16" y="11" width="1" height="1" fill="#000000"/><rect x="3" y="12" width="1" height="1" fill="#808080"/><rect x="4" y="12" width="1" height="1" fill="#ffff00"/><rect x="5" y="12" width="1" height="1" fill="#c0c0c0"/><rect x="6" y="12" width="1" height="1" fill="#ffff00"/><rect x="7" y="12" width="1" height="1" fill="#c0c0c0"/><rect x="8" y="12" width="1" height="1" fill="#ffff00"/><rect x="9" y="12" width="1" height="1" fill="#c0c0c0"/><rect x="10" y="12" width="1" height="1" fill="#ffff00"/><rect x="11" y="12" width="1" height="1" fill="#c0c0c0"/><rect x="12" y="12" width="1" height="1" fill="#ffff00"/><rect x="13" y="12" width="1" height="1" fill="#c0c0c0"/><rect x="14" y="12" width="1" height="1" fill="#ffff00"/><rect x="15" y="12" width="1" height="1" fill="#c0c0c0"/><rect x="16" y="12" width="1" height="1" fill="#000000"/><rect x="4" y="13" width="1" height="1" fill="#808080"/><rect x="5" y="13" width="1" height="1" fill="#ffff00"/><rect x="6" y="13" width="1" height="1" fill="#c0c0c0"/><rect x="7" y="13" width="1" height="1" fill="#ffff00"/><rect x="8" y="13" width="1" height="1" fill="#c0c0c0"/><rect x="9" y="13" width="1" height="1" fill="#ffff00"/><rect x="10" y="13" width="1" height="1" fill="#c0c0c0"/><rect x="11" y="13" width="1" height="1" fill="#ffff00"/><rect x="12" y="13" width="1" height="1" fill="#c0c0c0"/><rect x="13" y="13" width="1" height="1" fill="#ffff00"/><rect x="14" y="13" width="1" height="1" fill="#c0c0c0"/><rect x="15" y="13" width="1" height="1" fill="#ffff00"/><rect x="16" y="13" width="1" height="1" fill="#000000"/><rect x="4" y="14" width="13" height="1" fill="#000000"/></symbol></defs></svg>
<svg class="ic" style="left:1126px;top:686px" width="16" height="16" shape-rendering="crispEdges"><rect x="15" y="2" width="1" height="1" fill="#fff"/><rect x="14" y="3" width="1" height="1" fill="#fff"/><rect x="15" y="3" width="1" height="1" fill="#808080"/><rect x="13" y="4" width="1" height="1" fill="#fff"/><rect x="14" y="4" width="1" height="1" fill="#808080"/><rect x="15" y="4" width="1" height="1" fill="#808080"/><rect x="12" y="5" width="1" height="1" fill="#fff"/><rect x="13" y="5" width="1" height="1" fill="#808080"/><rect x="14" y="5" width="1" height="1" fill="#808080"/><rect x="15" y="5" width="1" height="1" fill="#d4d0c8"/><rect x="11" y="6" width="1" height="1" fill="#fff"/><rect x="12" y="6" width="1" height="1" fill="#808080"/><rect x="13" y="6" width="1" height="1" fill="#808080"/><rect x="14" y="6" width="1" height="1" fill="#d4d0c8"/><rect x="15" y="6" width="1" height="1" fill="#fff"/><rect x="10" y="7" width="1" height="1" fill="#fff"/><rect x="11" y="7" width="1" height="1" fill="#808080"/><rect x="12" y="7" width="1" height="1" fill="#808080"/><rect x="13" y="7" width="1" height="1" fill="#d4d0c8"/><rect x="14" y="7" width="1" height="1" fill="#fff"/><rect x="15" y="7" width="1" height="1" fill="#808080"/><rect x="9" y="8" width="1" height="1" fill="#fff"/><rect x="10" y="8" width="1" height="1" fill="#808080"/><rect x="11" y="8" width="1" height="1" fill="#808080"/><rect x="12" y="8" width="1" height="1" fill="#d4d0c8"/><rect x="13" y="8" width="1" height="1" fill="#fff"/><rect x="14" y="8" width="1" height="1" fill="#808080"/><rect x="15" y="8" width="1" height="1" fill="#808080"/><rect x="8" y="9" width="1" height="1" fill="#fff"/><rect x="9" y="9" width="1" height="1" fill="#808080"/><rect x="10" y="9" width="1" height="1" fill="#808080"/><rect x="11" y="9" width="1" height="1" fill="#d4d0c8"/><rect x="12" y="9" width="1" height="1" fill="#fff"/><rect x="13" y="9" width="1" height="1" fill="#808080"/><rect x="14" y="9" width="1" height="1" fill="#808080"/><rect x="15" y="9" width="1" height="1" fill="#d4d0c8"/><rect x="7" y="10" width="1" height="1" fill="#fff"/><rect x="8" y="10" width="1" height="1" fill="#808080"/><rect x="9" y="10" width="1" height="1" fill="#808080"/><rect x="10" y="10" width="1" height="1" fill="#d4d0c8"/><rect x="11" y="10" width="1" height="1" fill="#fff"/><rect x="12" y="10" width="1" height="1" fill="#808080"/><rect x="13" y="10" width="1" height="1" fill="#808080"/><rect x="14" y="10" width="1" height="1" fill="#d4d0c8"/><rect x="15" y="10" width="1" height="1" fill="#fff"/><rect x="6" y="11" width="1" height="1" fill="#fff"/><rect x="7" y="11" width="1" height="1" fill="#808080"/><rect x="8" y="11" width="1" height="1" fill="#808080"/><rect x="9" y="11" width="1" height="1" fill="#d4d0c8"/><rect x="10" y="11" width="1" height="1" fill="#fff"/><rect x="11" y="11" width="1" height="1" fill="#808080"/><rect x="12" y="11" width="1" height="1" fill="#808080"/><rect x="13" y="11" width="1" height="1" fill="#d4d0c8"/><rect x="14" y="11" width="1" height="1" fill="#fff"/><rect x="15" y="11" width="1" height="1" fill="#808080"/><rect x="5" y="12" width="1" height="1" fill="#fff"/><rect x="6" y="12" width="1" height="1" fill="#808080"/><rect x="7" y="12" width="1" height="1" fill="#808080"/><rect x="8" y="12" width="1" height="1" fill="#d4d0c8"/><rect x="9" y="12" width="1" height="1" fill="#fff"/><rect x="10" y="12" width="1" height="1" fill="#808080"/><rect x="11" y="12" width="1" height="1" fill="#808080"/><rect x="12" y="12" width="1" height="1" fill="#d4d0c8"/><rect x="13" y="12" width="1" height="1" fill="#fff"/><rect x="14" y="12" width="1" height="1" fill="#808080"/><rect x="15" y="12" width="1" height="1" fill="#808080"/><rect x="4" y="13" width="1" height="1" fill="#fff"/><rect x="5" y="13" width="1" height="1" fill="#808080"/><rect x="6" y="13" width="1" height="1" fill="#808080"/><rect x="7" y="13" width="1" height="1" fill="#d4d0c8"/><rect x="8" y="13" width="1" height="1" fill="#fff"/><rect x="9" y="13" width="1" height="1" fill="#808080"/><rect x="10" y="13" width="1" height="1" fill="#808080"/><rect x="11" y="13" width="1" height="1" fill="#d4d0c8"/><rect x="12" y="13" width="1" height="1" fill="#fff"/><rect x="13" y="13" width="1" height="1" fill="#808080"/><rect x="14" y="13" width="1" height="1" fill="#808080"/><rect x="15" y="13" width="1" height="1" fill="#d4d0c8"/><rect x="3" y="14" width="1" height="1" fill="#fff"/><rect x="4" y="14" width="1" height="1" fill="#808080"/><rect x="5" y="14" width="1" height="1" fill="#808080"/><rect x="6" y="14" width="1" height="1" fill="#d4d0c8"/><rect x="7" y="14" width="1" height="1" fill="#fff"/><rect x="8" y="14" width="1" height="1" fill="#808080"/><rect x="9" y="14" width="1" height="1" fill="#808080"/><rect x="10" y="14" width="1" height="1" fill="#d4d0c8"/><rect x="11" y="14" width="1" height="1" fill="#fff"/><rect x="12" y="14" width="1" height="1" fill="#808080"/><rect x="13" y="14" width="1" height="1" fill="#808080"/><rect x="14" y="14" width="1" height="1" fill="#d4d0c8"/><rect x="15" y="14" width="1" height="1" fill="#fff"/><rect x="2" y="15" width="1" height="1" fill="#fff"/><rect x="3" y="15" width="1" height="1" fill="#808080"/><rect x="4" y="15" width="1" height="1" fill="#808080"/><rect x="5" y="15" width="1" height="1" fill="#d4d0c8"/><rect x="6" y="15" width="1" height="1" fill="#fff"/><rect x="7" y="15" width="1" height="1" fill="#808080"/><rect x="8" y="15" width="1" height="1" fill="#808080"/><rect x="9" y="15" width="1" height="1" fill="#d4d0c8"/><rect x="10" y="15" width="1" height="1" fill="#fff"/><rect x="11" y="15" width="1" height="1" fill="#808080"/><rect x="12" y="15" width="1" height="1" fill="#808080"/><rect x="13" y="15" width="1" height="1" fill="#d4d0c8"/><rect x="14" y="15" width="1" height="1" fill="#fff"/><rect x="15" y="15" width="1" height="1" fill="#808080"/></svg>
</body></html>
